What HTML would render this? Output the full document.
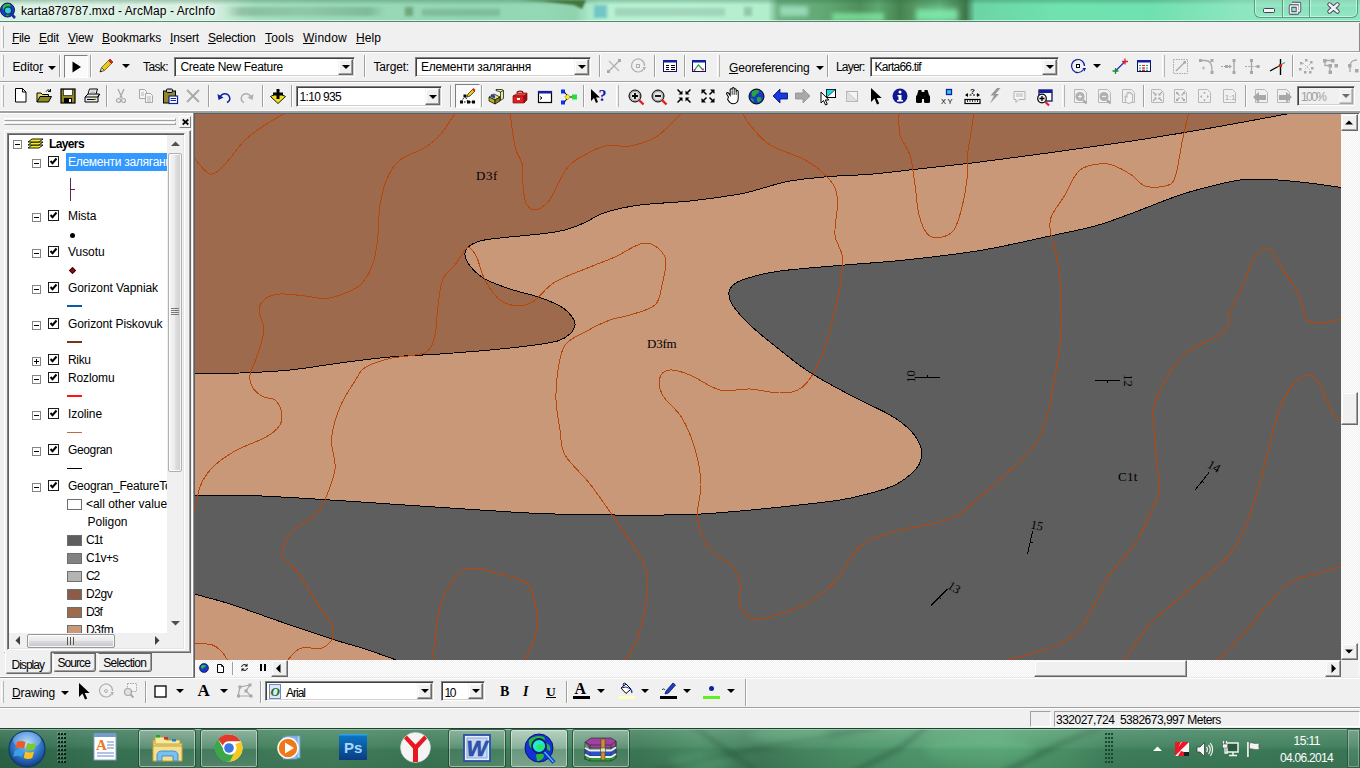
<!DOCTYPE html>
<html><head><meta charset="utf-8">
<style>
*{box-sizing:border-box;margin:0;padding:0}
html,body{width:1360px;height:768px;overflow:hidden;background:#f0f0f0;font-family:"Liberation Sans",sans-serif;font-size:12px;color:#000}
.a{position:absolute}
.t{position:absolute;white-space:nowrap;line-height:14px;font-size:12px}
.ser{font-family:"Liberation Serif",serif}
u{text-decoration:underline;text-underline-offset:1px}
.sep{position:absolute;width:2px;border-left:1px solid #a0a0a0;border-right:1px solid #fff}
.hline{position:absolute;left:0;width:1360px;height:2px;border-top:1px solid #a0a0a0;border-bottom:1px solid #fff}
.grip{position:absolute;width:3px;border-left:1px solid #fff;border-right:1px solid #b4b4b4}
.combo{position:absolute;background:#fff;border:1px solid;border-color:#808080 #fff #fff #808080;box-shadow:inset 1px 1px 0 #404040, inset -1px -1px 0 #d4d0c8}
.cbtn{position:absolute;background:#f0f0f0;border:1px solid;border-color:#f4f4f4 #696969 #696969 #f4f4f4;box-shadow:inset -1px -1px 0 #a0a0a0,inset 1px 1px 0 #fff}
.rbtn{position:absolute;background:#f0f0f0;border:1px solid;border-color:#f4f4f4 #696969 #696969 #f4f4f4;box-shadow:inset -1px -1px 0 #a0a0a0,inset 1px 1px 0 #fff}
.cbtn:after,.dd:after{content:"";position:absolute;left:50%;top:50%;margin:-2px 0 0 -4px;border:4px solid transparent;border-top:4px solid #000;border-bottom:0}
.dd{position:absolute;width:9px;height:6px}
svg{position:absolute;overflow:visible}
</style></head><body>

<!-- TITLEBAR -->
<div id="title" class="a" style="left:0;top:0;width:1360px;height:22px;overflow:hidden;background:linear-gradient(90deg,#d9f1e2 0,#d6f0e0 212px,#a6dfc1 255px,#9cdaba 330px,#98d8b7 395px,#93d6b4 470px,#95d8b6 540px,#8fd2ae 575px,#a8e6c6 588px,#b7f0d2 600px,#baf1d4 690px,#b2edcc 768px,#6fb083 778px,#68ac7c 806px,#5fa570 830px,#4f8f5c 860px,#5fa670 878px,#47834f 900px,#5a9c68 918px,#63b07c 940px,#4d8a58 958px,#3f7549 966px,#6cd4a6 975px,#70e2b0 1060px,#6fdcae 1360px)">
 <div class="a" style="left:225px;top:7px;width:160px;height:9px;background:linear-gradient(90deg,rgba(80,130,100,0),rgba(80,130,100,.35) 10%,rgba(80,130,100,.22) 50%,rgba(80,130,100,.35) 90%,rgba(80,130,100,0));filter:blur(1.500px)"></div>
 <div class="a" style="left:405px;top:7px;width:8px;height:9px;background:rgba(70,120,60,.5);filter:blur(1.500px)"></div>
 <div class="a" style="left:422px;top:9px;width:78px;height:7px;background:rgba(80,130,100,.3);filter:blur(1.500px)"></div>
 <div class="a" style="left:594px;top:5px;width:13px;height:13px;background:rgba(70,170,190,.6);filter:blur(1.500px)"></div>
 <div class="a" style="left:615px;top:8px;width:110px;height:8px;background:rgba(110,150,130,.3);filter:blur(1.500px)"></div>
 <div class="a" style="left:744px;top:7px;width:8px;height:9px;background:rgba(90,130,110,.35);filter:blur(1.500px)"></div>
 <div class="a" style="left:780px;top:6px;width:28px;height:10px;background:rgba(170,235,205,.7);filter:blur(2px)"></div>
 <div class="a" style="left:832px;top:13px;width:52px;height:8px;background:rgba(130,235,165,.75);filter:blur(2px)"></div>
 <div class="a" style="left:916px;top:9px;width:42px;height:12px;background:rgba(130,240,180,.8);filter:blur(2.500px)"></div>
 <div class="a" style="left:0;top:0;width:1360px;height:5px;background:linear-gradient(180deg,rgba(40,110,70,.32),rgba(40,110,70,0))"></div>
 <svg style="left:0;top:0" width="1360" height="22"><path d="M518,0L586,0L582,9L574,5L545,1.500z" fill="#44763c" style="filter:blur(1px)"/></svg>
 <div class="a" style="left:0;top:20px;width:1360px;height:1px;background:rgba(220,255,238,.75)"></div>
 <div class="a" style="left:0;top:21px;width:1360px;height:1px;background:#56866e"></div>
 <!-- window buttons -->
 <div class="a" style="left:1150px;top:0;width:210px;height:20px;background:linear-gradient(90deg,rgba(180,240,215,0),rgba(180,240,215,.45) 45%,rgba(180,240,215,.45))"></div>
 <div class="a" style="left:1254px;top:-4px;width:104px;height:22px;border:1px solid rgba(70,140,110,.8);border-radius:0 0 6px 6px;box-shadow:inset 0 0 0 1px rgba(215,250,235,.7);background:linear-gradient(180deg,rgba(255,255,255,.12),rgba(255,255,255,.04) 50%,rgba(0,0,0,.02) 51%,rgba(255,255,255,.06))"></div>
 <div class="a" style="left:1282px;top:0;width:1px;height:17px;background:rgba(70,140,110,.8)"></div>
 <div class="a" style="left:1283px;top:0;width:1px;height:17px;background:rgba(215,250,235,.7)"></div>
 <div class="a" style="left:1309px;top:0;width:1px;height:17px;background:rgba(70,140,110,.8)"></div>
 <div class="a" style="left:1310px;top:0;width:1px;height:17px;background:rgba(215,250,235,.7)"></div>
 <div class="a" style="left:1263px;top:8px;width:12px;height:5px;background:#f4f4f4;border:1px solid #46405a;border-radius:1.500px"></div>
 <svg style="left:1288px;top:1px" width="14" height="14" viewBox="0 0 14 14"><path d="M4,2.500h7.500v7.500h-1.500M2.500,5h7v7h-7z" fill="none" stroke="#46405a" stroke-width="3.400" stroke-linejoin="round"/><path d="M4,2.500h7.500v7.500h-1.500M2.500,5h7v7h-7z" fill="none" stroke="#f2f2f2" stroke-width="1.700" stroke-linejoin="round"/></svg>
 <svg style="left:1327px;top:2px" width="13" height="12" viewBox="0 0 13 12"><path d="M2.500,2.500L10.500,9.500M10.500,2.500L2.500,9.500" stroke="#46405a" stroke-width="4.400" stroke-linecap="round"/><path d="M2.500,2.500L10.500,9.500M10.500,2.500L2.500,9.500" stroke="#f2f2f2" stroke-width="2.600" stroke-linecap="round"/></svg>
 <svg style="left:0px;top:2px" width="17" height="18" viewBox="0 0 17 18"><circle cx="7.5" cy="8" r="7" fill="#1a3fc0" stroke="#0a1a60" stroke-width="1"/>
<path d="M3,4c2,-2 5,-2.5 7,-1.5c1,1.5 0,3 -1.5,3.5c-1.5,0.5 -2,2 -3.5,2.5c-1.5,0 -2.5,-2 -2,-4.5z" fill="#2fbf3f"/>
<path d="M6,11c1,-1 3,-1 4,0c0,2 -2,3 -3.500,3z" fill="#2fbf3f"/>
<circle cx="8" cy="8.5" r="3.6" fill="#35e0e8" fill-opacity=".85" stroke="#0a2a50" stroke-width="1.2"/>
<path d="M10.6,11.200L15,16" stroke="#1a2aa0" stroke-width="2.600"/></svg>
 <div class="t" style="left:21px;top:4.0px;letter-spacing:0.06px;text-shadow:0 0 6px #fff,0 0 8px #fff;">karta878787.mxd - ArcMap - ArcInfo</div>
</div>
<!-- MENUBAR -->
<div id="menu" class="a" style="left:0;top:22px;width:1360px;height:29px;background:#f0f0f0">
 <div class="grip" style="left:1px;top:4px;height:22px"></div>
</div>
<div class="t" style="left:12px;top:31.0px;letter-spacing:-0.34px;"><u>F</u>ile</div>
<div class="t" style="left:39px;top:31.0px;letter-spacing:-0.18px;"><u>E</u>dit</div>
<div class="t" style="left:68px;top:31.0px;letter-spacing:-0.20px;"><u>V</u>iew</div>
<div class="t" style="left:102px;top:31.0px;letter-spacing:-0.11px;"><u>B</u>ookmarks</div>
<div class="t" style="left:170px;top:31.0px;letter-spacing:-0.17px;"><u>I</u>nsert</div>
<div class="t" style="left:208px;top:31.0px;letter-spacing:-0.21px;"><u>S</u>election</div>
<div class="t" style="left:265px;top:31.0px;letter-spacing:0.20px;"><u>T</u>ools</div>
<div class="t" style="left:303px;top:31.0px;letter-spacing:0.22px;"><u>W</u>indow</div>
<div class="t" style="left:356px;top:31.0px;letter-spacing:0.08px;"><u>H</u>elp</div>
<div class="a" style="left:1359px;top:23px;width:1px;height:28px;background:#8a8a8a"></div>
<div class="hline" style="top:51px"></div>

<!-- TOOLBAR 1 -->
<div class="grip" style="left:1px;top:55px;height:22px"></div>
<div class="t" style="left:12.5px;top:60.0px;letter-spacing:-0.14px;">Edito<u>r</u></div>
<div class="dd" style="left:47px;top:65px"></div>
<div class="sep" style="left:59px;top:55px;height:22px"></div>
<div class="a" style="left:64px;top:55px;width:24px;height:23px;border:1px solid;border-color:#808080 #fff #fff #808080;background:#fafafa"></div>
<svg style="left:72px;top:61px" width="9" height="12" viewBox="0 0 9 12"><path d="M0.500,0.500v11l8.500,-5.500z" fill="#000"/></svg>
<div class="sep" style="left:90px;top:55px;height:22px"></div>
<svg style="left:98px;top:58px" width="16" height="16" viewBox="0 0 16 16"><path d="M2,14l1.5,-4.500l3,3z" fill="#e8d8a0" stroke="#333" stroke-width=".8"/><path d="M3.5,9.500l7,-7l3,3l-7,7z" fill="#e8c820" stroke="#6b5a00" stroke-width=".8"/><path d="M10.500,2.500l1.500,-1.500l3,3l-1.500,1.500z" fill="#e02020" stroke="#801010" stroke-width=".6"/><path d="M2,14l.7,-1.800l1.100,1.100z" fill="#000"/></svg>
<div class="dd" style="left:121px;top:63px"></div>
<div class="t" style="left:143px;top:60.0px;letter-spacing:-0.60px;">Task:</div>
<div class="combo" style="left:174px;top:57px;width:181px;height:20px"></div>
<div class="cbtn" style="left:338px;top:59px;width:15px;height:16px"></div>
<div class="t" style="left:180.5px;top:60.0px;letter-spacing:-0.31px;">Create New Feature</div>
<div class="sep" style="left:364px;top:55px;height:22px"></div>
<div class="t" style="left:373.5px;top:60.0px;letter-spacing:-0.17px;">Target:</div>
<div class="combo" style="left:415px;top:57px;width:176px;height:20px"></div>
<div class="cbtn" style="left:574px;top:59px;width:15px;height:16px"></div>
<div class="t" style="left:421px;top:60.0px;letter-spacing:-0.28px;">Елементи залягання</div>
<div class="sep" style="left:599px;top:55px;height:22px"></div>
<svg style="left:606px;top:58px" width="16" height="16" viewBox="0 0 16 16"><path d="M2,14L14,2" stroke="#a8a8a8" stroke-width="1.200"/><path d="M3,3L13,13" stroke="#b8b8b8" stroke-width="1.200"/><rect x="1" y="12" width="3" height="3" fill="#a8a8a8"/><rect x="12" y="1" width="3" height="3" fill="#a8a8a8"/></svg>
<svg style="left:630px;top:58px" width="16" height="16" viewBox="0 0 16 16"><path d="M13.500,11A6.500,6.500 0 1 1 14.500,8" fill="none" stroke="#b0b0b0" stroke-width="1.200"/><path d="M12.500,9l2,3.500l1.500,-3.500z" fill="#b0b0b0"/><rect x="6.500" y="6.500" width="3" height="3" fill="none" stroke="#b0b0b0"/></svg>
<div class="sep" style="left:654px;top:55px;height:22px"></div>
<svg style="left:662px;top:58px" width="16" height="16" viewBox="0 0 16 16"><rect x="1.500" y="2.500" width="13" height="11" fill="#fff" stroke="#101060" stroke-width="1"/><rect x="1" y="2" width="14" height="2.500" fill="#1020a0"/><path d="M3.500,7.500h3.500M9,7.500h3.500M3.500,9.500h3.500M9,9.500h3.500M3.500,11.500h3.500M9,11.500h3.500" stroke="#000" stroke-width="1" shape-rendering="crispEdges"/></svg>
<div class="sep" style="left:684px;top:55px;height:22px"></div>
<svg style="left:691px;top:58px" width="16" height="16" viewBox="0 0 16 16"><rect x="1.500" y="2.500" width="13" height="11" fill="#fff" stroke="#101060" stroke-width="1"/><rect x="1" y="2" width="14" height="2.500" fill="#1020a0"/><path d="M3.500,12l4,-5l4,4.500" fill="none" stroke="#20a040" stroke-width="1.200"/><circle cx="3.500" cy="12" r="1" fill="#e02020"/><circle cx="12" cy="11.500" r="1" fill="#e02020"/></svg>
<div class="grip" style="left:717px;top:55px;height:22px"></div>
<div class="t" style="left:729px;top:61.0px;letter-spacing:-0.16px;"><u>G</u>eoreferencing</div>
<div class="dd" style="left:815px;top:65px"></div>
<div class="sep" style="left:827px;top:55px;height:22px"></div>
<div class="t" style="left:836px;top:60.0px;letter-spacing:-0.81px;">Layer:</div>
<div class="combo" style="left:870px;top:57px;width:189px;height:20px"></div>
<div class="cbtn" style="left:1042px;top:59px;width:15px;height:16px"></div>
<div class="t" style="left:874.5px;top:60.0px;letter-spacing:-0.75px;">Karta66.tif</div>
<svg style="left:1070px;top:58px" width="16" height="16" viewBox="0 0 16 16"><path d="M13.500,11.500A6.500,6.500 0 1 1 14.500,8" fill="none" stroke="#1020a0" stroke-width="1.200"/><path d="M12.500,10l2,3.500l1.500,-3.500z" fill="#1020a0"/><rect x="6.500" y="6.500" width="3" height="3" fill="#fff" stroke="#000"/></svg>
<div class="dd" style="left:1092px;top:63px"></div>
<svg style="left:1112px;top:58px" width="17" height="17" viewBox="0 0 17 17"><path d="M3.500,13L13,3.500" stroke="#2030c0" stroke-width="1.300"/><path d="M10,3.500h6M13,.5v6" stroke="#e02020" stroke-width="1.300"/><path d="M.5,13h6M3.500,10v6" stroke="#109030" stroke-width="1.300"/></svg>
<svg style="left:1136px;top:58px" width="16" height="16" viewBox="0 0 16 16"><rect x="1.500" y="2.500" width="13" height="11" fill="#fff" stroke="#101060" stroke-width="1"/><rect x="1" y="2" width="14" height="2.500" fill="#1020a0"/><path d="M3,7.500h10M3,10h10M3,12.300h10" stroke="#30a050" stroke-width="1.200" stroke-dasharray="2,1.500"/><path d="M6,7.500h3M6,10h3M6,12.300h3" stroke="#e02020" stroke-width="1.200"/></svg>
<div class="grip" style="left:1162px;top:55px;height:22px"></div>
<svg style="left:1172px;top:58px" width="17" height="17" viewBox="0 0 17 17"><rect x="1.500" y="1.500" width="14" height="14" fill="none" stroke="#a8a8a8" stroke-dasharray="1.500,1"/><path d="M4,13L13,4" stroke="#a8a8a8" stroke-width="1.300"/><rect x="11.500" y="3" width="2.500" height="2.500" fill="#a8a8a8"/></svg>
<svg style="left:1198px;top:58px" width="17" height="17" viewBox="0 0 17 17"><path d="M2,2.500h5c4,0 7,3 7,9v3" fill="none" stroke="#a8a8a8" stroke-width="1.300"/><rect x="1" y="1" width="3" height="3" fill="#a8a8a8"/><rect x="12.500" y="1" width="3" height="3" fill="#a8a8a8"/><rect x="12.500" y="13" width="3" height="3" fill="#a8a8a8"/><path d="M4,10h3M5.500,8.500v3" stroke="#b0b0b0"/></svg>
<svg style="left:1220px;top:58px" width="17" height="17" viewBox="0 0 17 17"><path d="M1,8.500h9" stroke="#a8a8a8" stroke-width="1.200" stroke-dasharray="2,1"/><path d="M14,1v15" stroke="#a8a8a8" stroke-width="1.400"/><rect x="5" y="7" width="3" height="3" fill="#a8a8a8"/><rect x="12.500" y="1" width="3" height="3" fill="#a8a8a8"/><rect x="12.500" y="13" width="3" height="3" fill="#a8a8a8"/><path d="M9,6.500l3,2l-3,2z" fill="#a8a8a8"/></svg>
<svg style="left:1244px;top:58px" width="17" height="17" viewBox="0 0 17 17"><path d="M7.500,1v15" stroke="#a8a8a8" stroke-width="1.300"/><path d="M1,8.500h15" stroke="#a8a8a8" stroke-width="1.200" stroke-dasharray="2,1.200"/><rect x="6" y="1" width="3" height="3" fill="#a8a8a8"/><rect x="6" y="13" width="3" height="3" fill="#a8a8a8"/><rect x="12.500" y="7" width="3" height="3" fill="#a8a8a8"/></svg>
<svg style="left:1269px;top:58px" width="17" height="17" viewBox="0 0 17 17"><path d="M1,13L11,7.500" stroke="#000" stroke-width="1.300"/><path d="M11.500,1v16" stroke="#000" stroke-width="1.400"/><path d="M8,9l8,-4.500" stroke="#20a030" stroke-width="1"/><rect x="10" y="6" width="3" height="3" fill="#e02020"/></svg>
<div class="sep" style="left:1292px;top:55px;height:22px"></div>
<svg style="left:1298px;top:58px" width="17" height="17" viewBox="0 0 17 17"><g fill="#a8a8a8"><rect x="7" y="1" width="2.500" height="2.500"/><rect x="12" y="3" width="2.500" height="2.500"/><rect x="2" y="4" width="2.500" height="2.500"/><rect x="13" y="9" width="2.500" height="2.500"/><rect x="1" y="10" width="2.500" height="2.500"/><rect x="6" y="13" width="2.500" height="2.500"/><rect x="11" y="13" width="2.500" height="2.500"/></g><path d="M5,5l7,7M12,6l-6,6" stroke="#b8b8b8" stroke-dasharray="1.500,1.200"/></svg>
<svg style="left:1322px;top:58px" width="17" height="17" viewBox="0 0 17 17"><path d="M3,2.500h8M3,2.500v5h5v7" fill="none" stroke="#a8a8a8" stroke-width="1.300"/><g fill="#a8a8a8"><rect x="1" y="1" width="3.500" height="3.500"/><rect x="9" y="1" width="3.500" height="3.500"/><rect x="6.500" y="6" width="3.500" height="3.500"/><rect x="12.500" y="6" width="3.500" height="3.500"/><rect x="6.500" y="12.500" width="3.500" height="3.500"/></g></svg>
<svg style="left:1348px;top:58px" width="12" height="17" viewBox="0 0 12 17"><path d="M2,14v-6c0,-4 3,-6 7,-6" fill="none" stroke="#a8a8a8" stroke-width="1.300"/><g fill="#a8a8a8"><rect x="0" y="6" width="3.500" height="3.500"/><rect x="7" y="11" width="3.500" height="3.500"/></g></svg>
<div class="hline" style="top:81px"></div>

<!-- TOOLBAR 2 -->
<div class="grip" style="left:1px;top:85px;height:22px"></div>
<svg style="left:13px;top:87px" width="15" height="17" viewBox="0 0 15 17"><path d="M2.500,1.500h7l3.500,3.500v10h-10.500z" fill="#fff" stroke="#000" stroke-width="1"/><path d="M9.500,1.500v3.500h3.500" fill="none" stroke="#000" stroke-width="1"/></svg>
<svg style="left:36px;top:88px" width="17" height="16" viewBox="0 0 17 16"><path d="M1,14v-9h4l1.500,1.500h6v2" fill="#e8d870" stroke="#000" stroke-width="1"/><path d="M1,14l3,-5.500h11.500l-3,5.500z" fill="#908820" stroke="#000" stroke-width="1"/><path d="M10,3.500c1.500,-2 3.500,-2 4.500,0M14.500,3.500v-2.500M14.500,3.500h-2.500" fill="none" stroke="#000" stroke-width="1"/></svg>
<svg style="left:60px;top:88px" width="16" height="16" viewBox="0 0 16 16"><rect x="1" y="1" width="14" height="14" fill="#908820" stroke="#000" stroke-width="1.200"/><rect x="3.500" y="1.500" width="9" height="6" fill="#fff" stroke="#000" stroke-width=".6"/><rect x="4" y="10" width="8" height="5" fill="#000"/><rect x="9" y="11" width="2" height="3" fill="#fff"/></svg>
<svg style="left:84px;top:88px" width="17" height="16" viewBox="0 0 17 16"><path d="M4,6l1.500,-5h8l-1.500,5" fill="#fff" stroke="#000"/><path d="M1,9l3,-3h11.500l-1.500,3v5h-13z" fill="#e8e8e8" stroke="#000" stroke-width="1"/><path d="M1,9h13M14,9l1.500,-3" stroke="#000"/><path d="M3,11.500h9" stroke="#000" stroke-width="1"/><rect x="10" y="10" width="2.500" height="1.500" fill="#e8e020"/><path d="M6.500,3h5M6,4.700h5" stroke="#888" stroke-width=".7"/></svg>
<div class="sep" style="left:106px;top:85px;height:22px"></div>
<svg style="left:114px;top:88px" width="14" height="16" viewBox="0 0 14 16"><path d="M4,1l4,9M10,1l-4,9" stroke="#a8a8a8" stroke-width="1.300"/><circle cx="4.500" cy="12.500" r="2" fill="none" stroke="#a8a8a8" stroke-width="1.200"/><circle cx="9.500" cy="12.500" r="2" fill="none" stroke="#a8a8a8" stroke-width="1.200"/></svg>
<svg style="left:138px;top:88px" width="16" height="16" viewBox="0 0 16 16"><path d="M1.500,1.500h5l2,2v7h-7z" fill="#f4f4f4" stroke="#a8a8a8"/><path d="M7.500,5.500h5l2,2v7h-7z" fill="#f4f4f4" stroke="#a8a8a8"/><path d="M3,5h3M3,7h3M9,9h4M9,11h4M9,13h4" stroke="#b8b8b8"/></svg>
<svg style="left:162px;top:88px" width="17" height="17" viewBox="0 0 17 17"><rect x="1.500" y="3" width="12" height="12" fill="#908820" stroke="#000"/><rect x="4.500" y="1" width="6" height="3.500" rx="1" fill="#c8c8c8" stroke="#000"/><rect x="7" y="8" width="8.500" height="7.500" fill="#fff" stroke="#1020a0" stroke-width="1.200"/><path d="M8.500,10.500h5.500M8.500,12.500h5.500" stroke="#1020a0"/></svg>
<svg style="left:185px;top:88px" width="16" height="16" viewBox="0 0 16 16"><path d="M2,2L14,14M14,2L2,14" stroke="#a8a8a8" stroke-width="1.800"/></svg>
<div class="sep" style="left:208px;top:85px;height:22px"></div>
<svg style="left:217px;top:89px" width="14" height="15" viewBox="0 0 14 15"><path d="M3,8c2,-4.500 8,-4.500 9.500,0c.8,2.500 -.5,4.500 -2.500,5.500" fill="none" stroke="#1020a0" stroke-width="1.500"/><path d="M.5,5l1,6l5,-2.500z" fill="#1020a0"/></svg>
<svg style="left:240px;top:89px" width="14" height="15" viewBox="0 0 14 15"><path d="M11,8c-2,-4.500 -8,-4.500 -9.500,0c-.8,2.500 .5,4.500 2.500,5.500" fill="none" stroke="#b0b0b0" stroke-width="1.500"/><path d="M13.500,5l-1,6l-5,-2.500z" fill="#b0b0b0"/></svg>
<div class="sep" style="left:262px;top:85px;height:22px"></div>
<svg style="left:270px;top:88px" width="16" height="16" viewBox="0 0 16 16"><path d="M0.500,8.500l7.500,7l7.500,-7l-4,-2h-7z" fill="#f0e020" stroke="#000" stroke-width=".9"/><path d="M8,1v10M3,6h10" stroke="#000" stroke-width="3"/></svg>
<div class="sep" style="left:291px;top:85px;height:22px"></div>
<div class="combo" style="left:296px;top:86px;width:146px;height:21px"></div>
<div class="cbtn" style="left:425px;top:88px;width:15px;height:17px"></div>
<div class="t" style="left:299.5px;top:90.0px;letter-spacing:-0.65px;">1:10 935</div>
<div class="sep" style="left:450px;top:85px;height:22px"></div>
<div class="a" style="left:455px;top:84px;width:25px;height:24px;border:1px solid;border-color:#808080 #fff #fff #808080;background:#fafafa"></div>
<svg style="left:459px;top:88px" width="17" height="17" viewBox="0 0 17 17"><path d="M2,14l4,-6l3,6" fill="none" stroke="#000" stroke-dasharray="1.500,1.500"/><path d="M2,14h12" stroke="#000" stroke-dasharray="1.500,1.500"/><g fill="#000"><rect x="1" y="12.500" width="3" height="3"/><rect x="4.500" y="6.500" width="3" height="3"/><rect x="8" y="12.500" width="3" height="3"/><rect x="13" y="12.500" width="3" height="3"/></g><path d="M8,9l1,-3l5,-5l2,2l-5,5z" fill="#e8c820" stroke="#403000" stroke-width=".8"/><path d="M13,1.500l1.500,-1.500l2,2l-1.500,1.500z" fill="#e02020"/></svg>
<div class="sep" style="left:481px;top:85px;height:22px"></div>
<svg style="left:488px;top:88px" width="17" height="17" viewBox="0 0 17 17"><path d="M1,9l5,-3l6,3l-5,3z" fill="#e8e060" stroke="#000" stroke-width=".7"/><path d="M1,9v4l6,3v-4z" fill="#b8b030" stroke="#000" stroke-width=".7"/><path d="M7,12v4l5,-3v-4z" fill="#888020" stroke="#000" stroke-width=".7"/><path d="M8,1.500h6l1.500,1v8l-3,2v-8.500l-4.500,-1.500z" fill="#e8e8a0" stroke="#000" stroke-width=".7"/><path d="M12.500,4l3,-1.500" stroke="#000" stroke-width=".7"/><rect x="3" y="7" width="4" height="3" fill="#2040c0" transform="skewY(20) translate(0,-2)"/></svg>
<svg style="left:512px;top:89px" width="17" height="16" viewBox="0 0 17 16"><path d="M1,7l5,-3h9l-3,3z" fill="#f04040" stroke="#801010" stroke-width=".7"/><path d="M1,7h11v7h-11z" fill="#e02020" stroke="#801010" stroke-width=".7"/><path d="M12,7l3,-3v7l-3,3z" fill="#a01010" stroke="#801010" stroke-width=".7"/><path d="M5,4c0,-2.500 6,-2.500 6,0" fill="none" stroke="#801010" stroke-width="1.200"/><rect x="5" y="9" width="3" height="2" fill="#fff"/></svg>
<svg style="left:537px;top:89px" width="16" height="16" viewBox="0 0 16 16"><rect x="1.500" y="2.500" width="13" height="11" fill="#fff" stroke="#000" stroke-width="1.200"/><rect x="1" y="2" width="14" height="2.500" fill="#1020a0"/><path d="M3,7.500l2,1.500l-2,1.500" fill="none" stroke="#000" stroke-width="1"/></svg>
<svg style="left:560px;top:89px" width="17" height="16" viewBox="0 0 17 16"><rect x="1" y="0.500" width="4" height="4" fill="#1030f0"/><rect x="1" y="11.500" width="4" height="4" fill="#1030f0"/><path d="M4.500,3l3,4M4.500,13l3,-4M9,8h4" stroke="#000" stroke-width="1"/><path d="M7.500,5.200l2.800,2.800l-2.800,2.800l-2.800,-2.800z" fill="#f8f020" stroke="#806000" stroke-width=".5"/><rect x="12" y="5.500" width="5" height="5" fill="#20e040"/></svg>
<div class="sep" style="left:583px;top:85px;height:22px"></div>
<svg style="left:590px;top:88px" width="18" height="17" viewBox="0 0 18 17"><path d="M1,1v12l3,-3l2,5l2,-1l-2,-4.500h4z" fill="#000"/><text x="8.500" y="13" font-family="Liberation Serif" font-weight="bold" font-size="16" fill="#1020a0">?</text></svg>
<div class="grip" style="left:616px;top:85px;height:22px"></div>
<svg style="left:628px;top:89px" width="17" height="17" viewBox="0 0 17 17"><circle cx="7" cy="7" r="6" fill="#a8a8a8" stroke="#000" stroke-width="1"/><circle cx="7" cy="7" r="4" fill="#e4e4e4"/><path d="M4,7h6M7,4v6" stroke="#000" stroke-width="1.800"/><path d="M11,11l4.500,4.500" stroke="#e02020" stroke-width="2.400"/></svg>
<svg style="left:651px;top:89px" width="17" height="17" viewBox="0 0 17 17"><circle cx="7" cy="7" r="6" fill="#a8a8a8" stroke="#000" stroke-width="1"/><circle cx="7" cy="7" r="4" fill="#e4e4e4"/><path d="M4,7h6" stroke="#000" stroke-width="1.800"/><path d="M11,11l4.500,4.500" stroke="#e02020" stroke-width="2.400"/></svg>
<svg style="left:676px;top:88px" width="16" height="16" viewBox="0 0 16 16"><g stroke="#000" stroke-width="1.500" fill="none"><path d="M1.500,1.500l3.500,3.500M14.500,1.500l-3.500,3.500M1.500,14.500l3.500,-3.500M14.500,14.500l-3.500,-3.500"/></g><g fill="#000"><path d="M6.500,2.500v4h-4zM9.500,2.500v4h4zM6.500,13.500v-4h-4zM9.500,13.500v-4h4z"/></g></svg>
<svg style="left:700px;top:88px" width="16" height="16" viewBox="0 0 16 16"><g stroke="#000" stroke-width="1.500" fill="none"><path d="M3,3l3.500,3.500M13,3l-3.500,3.500M3,13l3.500,-3.500M13,13l-3.500,-3.500"/></g><g fill="#000"><path d="M1.500,1.500h4.500l-4.500,4.500zM14.500,1.500h-4.500l4.500,4.500zM1.500,14.500h4.500l-4.500,-4.500zM14.500,14.500h-4.500l4.500,-4.500z"/></g></svg>
<svg style="left:724px;top:87px" width="18" height="19" viewBox="0 0 18 19"><g transform="scale(1.120)"><path d="M4,9l-1.500,-2.500c-.8,-1.200 .8,-2 1.500,-1l1.500,2v-5c0,-1.300 1.800,-1.300 1.800,0v-1c0,-1.300 1.800,-1.300 1.800,0v1c0,-1.300 1.800,-1.300 1.800,0v1.500c0,-1.300 1.800,-1.300 1.800,0v6c0,3 -1.500,5 -4.500,5c-2.500,0 -3.500,-1 -5,-4z" fill="#fff" stroke="#000" stroke-width=".9"/><path d="M7.300,3v4M9.100,2.500v4.500M10.900,3.500v3.500" stroke="#000" stroke-width=".7"/></g></svg>
<svg style="left:748px;top:88px" width="17" height="17" viewBox="0 0 17 17"><circle cx="8.500" cy="8.500" r="7.500" fill="#1838c8" stroke="#000" stroke-width="1"/><path d="M4,3.500c2,-1.500 5,-2 7,-1c.5,2 -1,3 -2.500,3.500c-1,1.500 -1.500,3 -3,3c-1.500,-.5 -2.500,-3 -1.500,-5.500z" fill="#28a838"/><path d="M9,9.500c1.500,-1 3.500,-.5 4.500,.5c0,2.500 -1.500,4 -3.500,4.500c-1,-1.500 -1.500,-3.500 -1,-5z" fill="#28a838"/><path d="M3,11c1,0 2,1 2,2.500" stroke="#28a838" stroke-width="1.500" fill="none"/></svg>
<svg style="left:772px;top:88px" width="17" height="16" viewBox="0 0 17 16"><path d="M1,8l7,-7v4h7.500v6h-7.500v4z" fill="#1838e0" stroke="#000a60" stroke-width=".8"/></svg>
<svg style="left:794px;top:88px" width="17" height="16" viewBox="0 0 17 16"><path d="M16,8l-7,-7v4h-7.500v6h7.500v4z" fill="#a8a8a8" stroke="#909090" stroke-width=".8"/></svg>
<svg style="left:820px;top:88px" width="17" height="18" viewBox="0 0 17 18"><rect x="6.500" y="1.500" width="9" height="8" fill="#fff" stroke="#000"/><path d="M6.500,1.500h9l-9,8z" fill="#20d8e8" stroke="#000" stroke-width=".6"/><path d="M1,4v11l2.500,-2.500l2,4.500l1.800,-.8l-2,-4.200h3.500z" fill="#fff" stroke="#000" stroke-width="1"/></svg>
<svg style="left:844px;top:89px" width="16" height="15" viewBox="0 0 16 15"><rect x="2.500" y="2.500" width="11" height="10" fill="#f4f4f4" stroke="#b0b0b0"/><path d="M2.500,12.500v-10l11,10z" fill="#e0e0e0" stroke="#b0b0b0" stroke-width=".6"/></svg>
<svg style="left:869px;top:88px" width="14" height="17" viewBox="0 0 14 17"><path d="M2,0v14l3.500,-3.500l2.500,6l2.200,-1l-2.500,-5.500h5z" fill="#000"/></svg>
<svg style="left:892px;top:88px" width="16" height="16" viewBox="0 0 16 16"><circle cx="8" cy="8" r="7.500" fill="#101890"/><circle cx="8" cy="4" r="1.500" fill="#fff"/><path d="M5.500,7h4v5h1.500v1.500h-6v-1.500h1.500v-3.500h-1z" fill="#fff"/></svg>
<svg style="left:915px;top:88px" width="16" height="16" viewBox="0 0 16 16"><path d="M2,7l1.500,-5h3l.5,5zM14,7l-1.500,-5h-3l-.5,5z" fill="#000"/><rect x="6" y="4" width="4" height="4" fill="#000"/><rect x="1" y="7" width="6" height="8" rx="1.500" fill="#000"/><rect x="9" y="7" width="6" height="8" rx="1.500" fill="#000"/><rect x="7" y="8" width="2" height="3" fill="#000"/></svg>
<svg style="left:941px;top:88px" width="14" height="17" viewBox="0 0 14 17"><rect x="5.500" y="1.500" width="5" height="5" fill="#30c8f0" stroke="#1020a0" stroke-width="1.300"/><text x="0" y="16" font-family="Liberation Sans" font-size="7.500" fill="#000" letter-spacing="1.500">XY</text></svg>
<svg style="left:964px;top:88px" width="17" height="17" viewBox="0 0 17 17"><rect x="1" y="11.500" width="15" height="4" fill="#fff" stroke="#000" stroke-width="1.200"/><path d="M3.500,12v2M6,12v2M8.500,12v2M11,12v2M13.500,12v2" stroke="#000" stroke-width=".8"/><path d="M2,7h13" stroke="#000" stroke-dasharray="2,1.500"/><path d="M1,7l3,-2v4zM16,7l-3,-2v4z" fill="#000"/><text x="6" y="6" font-family="Liberation Sans" font-weight="bold" font-size="8" fill="#000">?</text></svg>
<svg style="left:988px;top:88px" width="13" height="16" viewBox="0 0 13 16"><path d="M9,0l-6.500,7.500h3.500l-4,8l9,-9.500h-3.500l5,-6z" fill="#989898"/></svg>
<svg style="left:1011px;top:89px" width="16" height="15" viewBox="0 0 16 15"><path d="M3,2.500h11v8h-6l-3,3v-3h-2z" fill="#f4f4f4" stroke="#b0b0b0"/><path d="M5,5h7M5,7h7" stroke="#b8b8b8"/></svg>
<svg style="left:1036px;top:89px" width="17" height="18" viewBox="0 0 17 18"><rect x="3" y="1" width="13" height="11" fill="#fff" stroke="#101060" stroke-width="1.300"/><rect x="3" y="1" width="13" height="3" fill="#1020a0"/><circle cx="6" cy="9.500" r="4.300" fill="#f0f0f0" stroke="#000" stroke-width="1.200"/><path d="M3.500,9.500h5M6,7v5" stroke="#000" stroke-width="1.300"/><path d="M9,12.500l4,4" stroke="#e02020" stroke-width="2.200"/></svg>
<div class="grip" style="left:1062px;top:85px;height:22px"></div>
<svg style="left:1072px;top:88px" width="17" height="17" viewBox="0 0 17 17"><path d="M2.500,1.500h9l3,3v10h-12z" fill="#f0f0f0" stroke="#b8b8b8"/><circle cx="8" cy="8.500" r="4.500" fill="#b0b0b0"/><path d="M11,12l3.500,3.500" stroke="#a8a8a8" stroke-width="2.200"/><path d="M6,8.500h4M8,6.500v4" stroke="#f0f0f0" stroke-width="1.200"/></svg>
<svg style="left:1096px;top:88px" width="17" height="17" viewBox="0 0 17 17"><path d="M2.500,1.500h9l3,3v10h-12z" fill="#f0f0f0" stroke="#b8b8b8"/><circle cx="8" cy="8.500" r="4.500" fill="#b0b0b0"/><path d="M11,12l3.500,3.500" stroke="#a8a8a8" stroke-width="2.200"/><path d="M6,8.500h4" stroke="#f0f0f0" stroke-width="1.200"/></svg>
<svg style="left:1120px;top:88px" width="17" height="17" viewBox="0 0 17 17"><path d="M2.500,1.500h9l3,3v10h-12z" fill="#f0f0f0" stroke="#b8b8b8"/><path d="M6,11l-1,-2c-.5,-1 .7,-1.500 1.200,-.7l.8,1v-4c0,-1 1.400,-1 1.400,0v-.5c0,-1 1.400,-1 1.400,0v.5c0,-1 1.400,-1 1.400,0v1c0,-1 1.400,-1 1.400,0v5c0,2.500 -1.300,4 -3.600,4c-2,0 -3,-1 -4,-3.500z" fill="#f4f4f4" stroke="#a8a8a8" stroke-width=".9"/></svg>
<div class="sep" style="left:1143px;top:85px;height:22px"></div>
<svg style="left:1149px;top:88px" width="17" height="17" viewBox="0 0 17 17"><path d="M2.500,1.500h9l3,3v10h-12z" fill="#f0f0f0" stroke="#b8b8b8"/><g stroke="#a8a8a8" stroke-width="1.100"><path d="M4,4l3,3M13,4l-3,3M4,13l3,-3M13,13l-3,-3"/></g><g fill="#a8a8a8"><path d="M7.500,5v2.500h-2.500zM9.500,5v2.500h2.500zM7.500,12v-2.500h-2.500zM9.500,12v-2.500h2.500z"/></g></svg>
<svg style="left:1172px;top:88px" width="17" height="17" viewBox="0 0 17 17"><path d="M2.500,1.500h9l3,3v10h-12z" fill="#f0f0f0" stroke="#b8b8b8"/><g stroke="#a8a8a8" stroke-width="1.100"><path d="M4.500,4.500l3,3M12.500,4.500l-3,3M4.500,12.500l3,-3M12.500,12.500l-3,-3"/></g><g fill="#a8a8a8"><path d="M4,4h2.500l-2.500,2.500zM13,4h-2.500l2.500,2.500zM4,13h2.500l-2.500,-2.500zM13,13h-2.500l2.500,-2.500z"/></g></svg>
<svg style="left:1196px;top:88px" width="17" height="17" viewBox="0 0 17 17"><path d="M2.500,1.500h9l3,3v10h-12z" fill="#f0f0f0" stroke="#b8b8b8"/><g fill="#a8a8a8"><path d="M8.500,3.500l1.500,2h-3zM8.500,13.500l1.500,-2h-3zM4,8.500l2,-1.500v3zM13,8.500l-2,-1.500v3z"/></g></svg>
<svg style="left:1221px;top:88px" width="17" height="17" viewBox="0 0 17 17"><path d="M2.500,1.500h9l3,3v10h-12z" fill="#f0f0f0" stroke="#b8b8b8"/><text x="4" y="12" font-family="Liberation Sans" font-size="7.500" fill="#a0a0a0">1:1</text></svg>
<div class="sep" style="left:1245px;top:85px;height:22px"></div>
<svg style="left:1252px;top:88px" width="17" height="17" viewBox="0 0 17 17"><path d="M3.500,1.500h9l3,3v10h-12z" fill="#f0f0f0" stroke="#b8b8b8"/><path d="M1,9l6,-5v3h7v5h-7v3z" fill="#a8a8a8"/></svg>
<svg style="left:1276px;top:88px" width="17" height="17" viewBox="0 0 17 17"><path d="M1.500,1.500h9l3,3v10h-12z" fill="#f0f0f0" stroke="#b8b8b8"/><path d="M16,9l-6,-5v3h-7v5h7v3z" fill="#a8a8a8"/></svg>
<div class="combo" style="left:1297px;top:86px;width:58px;height:20px;background:#f0f0f0"></div>
<div class="cbtn" style="left:1339px;top:88px;width:14px;height:16px;opacity:.55"></div>
<div class="t" style="left:1301px;top:90.0px;letter-spacing:-1.55px;color:#a0a0a0;">100%</div>
<div class="a" style="left:0;top:110px;width:1360px;height:1px;background:#fbfbfb"></div>
<div class="a" style="left:0;top:111px;width:1360px;height:2px;background:#a0a0a0"></div>

<!-- TOC -->
<div class="a" style="left:0;top:113px;width:195px;height:565px;background:#f0f0f0"></div>
<div class="a" style="left:0;top:113px;width:193px;height:1px;background:#fff"></div>
<div class="a" style="left:192px;top:113px;width:1px;height:564px;background:#fff"></div>
<div class="a" style="left:0;top:676px;width:193px;height:1px;background:#fff"></div>
<div class="a" style="left:193px;top:113px;width:1px;height:565px;background:#909090"></div>
<div class="a" style="left:0;top:677px;width:195px;height:1px;background:#888"></div>
<div class="a" style="left:194px;top:113px;width:1px;height:564px;background:#5a6068"></div>
<div class="a" style="left:4px;top:118px;width:172px;height:3px;border:1px solid;border-color:#fff #a0a0a0 #a0a0a0 #fff"></div>
<div class="a" style="left:4px;top:122px;width:172px;height:3px;border:1px solid;border-color:#fff #a0a0a0 #a0a0a0 #fff"></div>
<div class="a" style="left:179px;top:116px;width:12px;height:12px;border:1px solid;border-color:#fff #808080 #808080 #fff"></div>
<svg style="left:182px;top:119px" width="7" height="6" viewBox="0 0 7 6"><path d="M.7,.5L6.300,5.500M6.300,.5L.7,5.500" stroke="#000" stroke-width="1.700"/></svg>
<div class="a" style="left:4px;top:130px;width:187px;height:523px;border:1px solid;border-color:#fff #696969 #696969 #fff;box-shadow:inset -1px -1px 0 #a0a0a0"></div>
<div class="a" style="left:7px;top:133px;width:178px;height:517px;background:#fff;border:1px solid;border-color:#808080 #fff #fff #808080;box-shadow:inset 1px 1px 0 #606060, inset -1px -1px 0 #e4e4e4"></div>
<div class="a" style="left:9px;top:135px;width:158px;height:498px;overflow:hidden">
<svg style="left:4px;top:5px" width="9" height="9" viewBox="0 0 9 9"><rect x=".5" y=".5" width="8" height="8" fill="#fff" stroke="#848484"/><path d="M2,4.500h5" stroke="#000"/></svg>
<svg style="left:18px;top:2px" width="17" height="15" viewBox="0 0 17 15"><g fill="#f4ec20" stroke="#000" stroke-width=".9"><path d="M1,11l4,-3h11l-4,3z"/><path d="M1,8l4,-3h11l-4,3z"/><path d="M1,5l4,-3h11l-4,3z"/></g></svg>
<div class="t" style="left:40px;top:1.8px;letter-spacing:-0.62px;font-weight:bold;">Layers</div>
<div class="a" style="left:57px;top:18px;width:101px;height:18px;background:#3399ff"></div>
<svg style="left:23px;top:24px" width="9" height="9" viewBox="0 0 9 9"><rect x=".5" y=".5" width="8" height="8" fill="#fff" stroke="#848484"/><path d="M2,4.500h5" stroke="#000"/></svg>
<svg style="left:39px;top:21px" width="11" height="11" viewBox="0 0 11 11"><rect x=".5" y=".5" width="10" height="10" fill="#fff" stroke="#1c1c1c"/><path d="M2.500,5l2,2.200l4,-4.700" fill="none" stroke="#000" stroke-width="2"/></svg>
<div class="t" style="left:59px;top:19.8px;letter-spacing:-0.28px;color:#fff;">Елементи залягання</div>
<svg style="left:23px;top:78px" width="9" height="9" viewBox="0 0 9 9"><rect x=".5" y=".5" width="8" height="8" fill="#fff" stroke="#848484"/><path d="M2,4.500h5" stroke="#000"/></svg>
<svg style="left:39px;top:75px" width="11" height="11" viewBox="0 0 11 11"><rect x=".5" y=".5" width="10" height="10" fill="#fff" stroke="#1c1c1c"/><path d="M2.500,5l2,2.200l4,-4.700" fill="none" stroke="#000" stroke-width="2"/></svg>
<div class="t" style="left:59px;top:73.8px;letter-spacing:-0.07px;">Mista</div>
<svg style="left:23px;top:114px" width="9" height="9" viewBox="0 0 9 9"><rect x=".5" y=".5" width="8" height="8" fill="#fff" stroke="#848484"/><path d="M2,4.500h5" stroke="#000"/></svg>
<svg style="left:39px;top:111px" width="11" height="11" viewBox="0 0 11 11"><rect x=".5" y=".5" width="10" height="10" fill="#fff" stroke="#1c1c1c"/><path d="M2.500,5l2,2.200l4,-4.700" fill="none" stroke="#000" stroke-width="2"/></svg>
<div class="t" style="left:59px;top:109.8px;letter-spacing:-0.05px;">Vusotu</div>
<svg style="left:23px;top:150px" width="9" height="9" viewBox="0 0 9 9"><rect x=".5" y=".5" width="8" height="8" fill="#fff" stroke="#848484"/><path d="M2,4.500h5" stroke="#000"/></svg>
<svg style="left:39px;top:147px" width="11" height="11" viewBox="0 0 11 11"><rect x=".5" y=".5" width="10" height="10" fill="#fff" stroke="#1c1c1c"/><path d="M2.500,5l2,2.200l4,-4.700" fill="none" stroke="#000" stroke-width="2"/></svg>
<div class="t" style="left:59px;top:145.8px;letter-spacing:-0.07px;">Gorizont Vapniak</div>
<svg style="left:23px;top:186px" width="9" height="9" viewBox="0 0 9 9"><rect x=".5" y=".5" width="8" height="8" fill="#fff" stroke="#848484"/><path d="M2,4.500h5" stroke="#000"/></svg>
<svg style="left:39px;top:183px" width="11" height="11" viewBox="0 0 11 11"><rect x=".5" y=".5" width="10" height="10" fill="#fff" stroke="#1c1c1c"/><path d="M2.500,5l2,2.200l4,-4.700" fill="none" stroke="#000" stroke-width="2"/></svg>
<div class="t" style="left:59px;top:181.8px;letter-spacing:-0.13px;">Gorizont Piskovuk</div>
<svg style="left:23px;top:222px" width="9" height="9" viewBox="0 0 9 9"><rect x=".5" y=".5" width="8" height="8" fill="#fff" stroke="#848484"/><path d="M2,4.500h5M4.500,2v5" stroke="#000"/></svg>
<svg style="left:39px;top:219px" width="11" height="11" viewBox="0 0 11 11"><rect x=".5" y=".5" width="10" height="10" fill="#fff" stroke="#1c1c1c"/><path d="M2.500,5l2,2.200l4,-4.700" fill="none" stroke="#000" stroke-width="2"/></svg>
<div class="t" style="left:59px;top:217.8px;letter-spacing:-0.33px;">Riku</div>
<svg style="left:23px;top:240px" width="9" height="9" viewBox="0 0 9 9"><rect x=".5" y=".5" width="8" height="8" fill="#fff" stroke="#848484"/><path d="M2,4.500h5" stroke="#000"/></svg>
<svg style="left:39px;top:237px" width="11" height="11" viewBox="0 0 11 11"><rect x=".5" y=".5" width="10" height="10" fill="#fff" stroke="#1c1c1c"/><path d="M2.500,5l2,2.200l4,-4.700" fill="none" stroke="#000" stroke-width="2"/></svg>
<div class="t" style="left:59px;top:235.8px;letter-spacing:-0.12px;">Rozlomu</div>
<svg style="left:23px;top:276px" width="9" height="9" viewBox="0 0 9 9"><rect x=".5" y=".5" width="8" height="8" fill="#fff" stroke="#848484"/><path d="M2,4.500h5" stroke="#000"/></svg>
<svg style="left:39px;top:273px" width="11" height="11" viewBox="0 0 11 11"><rect x=".5" y=".5" width="10" height="10" fill="#fff" stroke="#1c1c1c"/><path d="M2.500,5l2,2.200l4,-4.700" fill="none" stroke="#000" stroke-width="2"/></svg>
<div class="t" style="left:59px;top:271.8px;letter-spacing:-0.10px;">Izoline</div>
<svg style="left:23px;top:312px" width="9" height="9" viewBox="0 0 9 9"><rect x=".5" y=".5" width="8" height="8" fill="#fff" stroke="#848484"/><path d="M2,4.500h5" stroke="#000"/></svg>
<svg style="left:39px;top:309px" width="11" height="11" viewBox="0 0 11 11"><rect x=".5" y=".5" width="10" height="10" fill="#fff" stroke="#1c1c1c"/><path d="M2.500,5l2,2.200l4,-4.700" fill="none" stroke="#000" stroke-width="2"/></svg>
<div class="t" style="left:59px;top:307.8px;letter-spacing:-0.36px;">Geogran</div>
<svg style="left:23px;top:348px" width="9" height="9" viewBox="0 0 9 9"><rect x=".5" y=".5" width="8" height="8" fill="#fff" stroke="#848484"/><path d="M2,4.500h5" stroke="#000"/></svg>
<svg style="left:39px;top:345px" width="11" height="11" viewBox="0 0 11 11"><rect x=".5" y=".5" width="10" height="10" fill="#fff" stroke="#1c1c1c"/><path d="M2.500,5l2,2.200l4,-4.700" fill="none" stroke="#000" stroke-width="2"/></svg>
<div class="t" style="left:59px;top:343.8px;letter-spacing:-0.24px;">Geogran_FeatureToP</div>
<div class="a" style="left:61px;top:43px;width:1px;height:23px;background:#5a2848"></div>
<div class="a" style="left:62px;top:54px;width:4px;height:1px;background:#5a2848"></div>
<div class="a" style="left:61px;top:98px;width:5px;height:5px;border-radius:50%;background:#000"></div>
<div class="a" style="left:61px;top:133px;width:5px;height:5px;transform:rotate(45deg);background:#8b1010;border:0.5px solid #400"></div>
<div class="a" style="left:58px;top:170px;width:15px;height:2px;background:#0a5aa8"></div>
<div class="a" style="left:58px;top:206px;width:15px;height:2px;background:#7a3418"></div>
<div class="a" style="left:58px;top:260px;width:15px;height:2px;background:#ff1414"></div>
<div class="a" style="left:58px;top:297px;width:15px;height:1px;background:#c46a3a"></div>
<div class="a" style="left:58px;top:333px;width:15px;height:1px;background:#000"></div>
<div class="a" style="left:58px;top:364px;width:15px;height:11px;background:#fff;border:1px solid #6e6e6e"></div>
<div class="t" style="left:77px;top:361.8px;letter-spacing:-0.04px;">&lt;all other values></div>
<div class="t" style="left:78.5px;top:379.8px;letter-spacing:-0.00px;">Poligon</div>
<div class="a" style="left:58px;top:400px;width:15px;height:11px;background:#5e5e5e;border:1px solid #6e6e6e"></div>
<div class="t" style="left:77px;top:397.8px;letter-spacing:-0.90px;">C1t</div>
<div class="a" style="left:58px;top:418px;width:15px;height:11px;background:#828282;border:1px solid #6e6e6e"></div>
<div class="t" style="left:77px;top:415.8px;letter-spacing:-0.47px;">C1v+s</div>
<div class="a" style="left:58px;top:436px;width:15px;height:11px;background:#b4b4b4;border:1px solid #6e6e6e"></div>
<div class="t" style="left:77px;top:433.8px;letter-spacing:-1.17px;">C2</div>
<div class="a" style="left:58px;top:454px;width:15px;height:11px;background:#8c5c48;border:1px solid #6e6e6e"></div>
<div class="t" style="left:77px;top:451.8px;letter-spacing:-0.38px;">D2gv</div>
<div class="a" style="left:58px;top:472px;width:15px;height:11px;background:#9e6a4d;border:1px solid #6e6e6e"></div>
<div class="t" style="left:77px;top:469.8px;letter-spacing:-0.90px;">D3f</div>
<div class="a" style="left:58px;top:490px;width:15px;height:11px;background:#c99879;border:1px solid #6e6e6e"></div>
<div class="t" style="left:77px;top:487.8px;letter-spacing:-0.34px;">D3fm</div>
</div>
<div class="a" style="left:167px;top:135px;width:16px;height:498px;background:#f0f0f0"></div>
<svg style="left:171px;top:141px" width="9" height="5" viewBox="0 0 9 5"><path d="M0,5l4.500,-4.500l4.500,4.500z" fill="#505050"/></svg>
<svg style="left:171px;top:621px" width="9" height="5" viewBox="0 0 9 5"><path d="M0,0l4.500,4.500l4.500,-4.500z" fill="#505050"/></svg>
<div class="a" style="left:168px;top:153px;width:14px;height:319px;border:1px solid #b0b0b0;border-radius:2px;background:linear-gradient(90deg,#f5f5f5,#ececee 45%,#dddee0 55%,#cdced2);box-shadow:inset 0 0 0 1px rgba(255,255,255,.8)"></div>
<div class="a" style="left:171px;top:308px;width:8px;height:1px;background:#7a7a7a"></div>
<div class="a" style="left:171px;top:310px;width:8px;height:1px;background:#7a7a7a"></div>
<div class="a" style="left:171px;top:312px;width:8px;height:1px;background:#7a7a7a"></div>
<div class="a" style="left:171px;top:314px;width:8px;height:1px;background:#7a7a7a"></div>
<div class="a" style="left:9px;top:633px;width:174px;height:15px;background:#f0f0f0"></div>
<svg style="left:15px;top:636px" width="5" height="9" viewBox="0 0 5 9"><path d="M5,0l-4.500,4.500l4.500,4.500z" fill="#404040"/></svg>
<svg style="left:155px;top:636px" width="5" height="9" viewBox="0 0 5 9"><path d="M0,0l4.500,4.500l-4.500,4.500z" fill="#404040"/></svg>
<div class="a" style="left:27px;top:634px;width:88px;height:14px;border:1px solid #979797;border-radius:2px;background:linear-gradient(180deg,#f5f5f5,#e9e9eb 45%,#d9dadc 55%,#c4c5c9);box-shadow:inset 0 0 0 1px rgba(255,255,255,.8)"></div>
<div class="a" style="left:67px;top:637px;width:1px;height:8px;background:#555"></div>
<div class="a" style="left:70px;top:637px;width:1px;height:8px;background:#555"></div>
<div class="a" style="left:73px;top:637px;width:1px;height:8px;background:#555"></div>
<div class="a" style="left:53px;top:653px;width:43px;height:19px;background:#f0f0f0;border:1px solid;border-color:#696969 #696969 #696969 #fff;border-radius:0 0 3px 3px;box-shadow:inset -1px -1px 0 #a0a0a0"></div>
<div class="a" style="left:98px;top:653px;width:54px;height:19px;background:#f0f0f0;border:1px solid;border-color:#696969 #696969 #696969 #fff;border-radius:0 0 3px 3px;box-shadow:inset -1px -1px 0 #a0a0a0"></div>
<div class="a" style="left:5px;top:651px;width:47px;height:23px;background:#f0f0f0;border:1px solid;border-color:#f0f0f0 #696969 #696969 #fff;border-radius:0 0 3px 3px;box-shadow:inset -1px -1px 0 #a0a0a0"></div>
<div class="t" style="left:11.5px;top:658.2px;letter-spacing:-0.98px;">Display</div>
<div class="t" style="left:57.4px;top:656.0px;letter-spacing:-0.91px;">Source</div>
<div class="t" style="left:103.2px;top:656.0px;letter-spacing:-0.71px;">Selection</div>
<!-- MAP -->
<div class="a" style="left:194px;top:113px;width:1165px;height:1px;background:#5a6068"></div>
<div id="map" class="a" style="left:195px;top:114px;width:1146px;height:546px;background:#c99879;overflow:hidden">
<svg class="a" style="left:0;top:0" width="1146" height="546" viewBox="195 114 1146 546" shape-rendering="crispEdges">
<path d="M194,112L1296,112C1280.8,115.1 1232.7,124.2 1205.0,129.0C1177.3,133.8 1155.0,137.5 1130.0,141.3C1105.0,145.1 1080.0,148.6 1055.0,152.0C1030.0,155.4 1005.0,158.9 980.0,162.0C955.0,165.1 923.3,168.4 905.0,170.5C886.7,172.6 882.5,173.3 870.0,174.3C857.5,175.3 843.3,175.4 830.0,176.5C816.7,177.6 800.8,179.2 790.0,181.0C779.2,182.8 773.3,185.3 765.0,187.5C756.7,189.7 752.5,191.8 740.0,194.0C727.5,196.2 706.7,199.2 690.0,201.0C673.3,202.8 654.2,203.1 640.0,205.0C625.8,206.9 614.2,209.6 605.0,212.5C595.8,215.4 591.7,219.6 585.0,222.5C578.3,225.4 572.5,228.1 565.0,230.0C557.5,231.9 550.8,232.7 540.0,234.0C529.2,235.3 510.0,236.8 500.0,238.0C490.0,239.2 485.4,239.4 480.0,241.0C474.6,242.6 470.0,245.2 467.5,247.5C465.0,249.8 464.6,251.9 465.0,255.0C465.4,258.1 466.7,262.0 470.0,266.0C473.3,270.0 478.3,275.2 485.0,279.0C491.7,282.8 500.8,285.9 510.0,289.0C519.2,292.1 531.2,294.4 540.0,297.5C548.8,300.6 557.1,304.2 562.5,307.5C567.9,310.8 570.4,314.6 572.5,317.5C574.6,320.4 575.4,322.2 575.0,325.0C574.6,327.8 572.9,331.3 570.0,334.0C567.1,336.7 563.3,339.2 557.5,341.0C551.7,342.8 546.2,343.5 535.0,345.0C523.8,346.5 505.8,348.5 490.0,350.0C474.2,351.5 456.7,352.8 440.0,354.0C423.3,355.2 406.7,355.5 390.0,357.0C373.3,358.5 356.7,360.8 340.0,363.0C323.3,365.2 306.7,368.3 290.0,370.0C273.3,371.7 256.0,372.4 240.0,373.0C224.0,373.6 201.7,373.4 194.0,373.5L194,112Z" fill="#9e6a4d"/>
<path d="M1342,187.5C1335.8,186.7 1317.0,183.8 1305.0,182.5C1293.0,181.2 1280.0,180.0 1270.0,179.5C1260.0,179.0 1253.3,178.8 1245.0,179.5C1236.7,180.2 1230.8,181.4 1220.0,184.0C1209.2,186.6 1195.0,190.0 1180.0,195.0C1165.0,200.0 1144.2,208.8 1130.0,214.0C1115.8,219.2 1108.3,222.3 1095.0,226.0C1081.7,229.7 1069.2,231.9 1050.0,236.0C1030.8,240.1 1004.2,246.5 980.0,250.5C955.8,254.5 927.5,257.6 905.0,260.0C882.5,262.4 865.8,263.2 845.0,265.0C824.2,266.8 795.8,268.9 780.0,271.0C764.2,273.1 757.5,275.4 750.0,277.5C742.5,279.6 738.5,281.0 735.0,283.5C731.5,286.0 729.4,288.9 729.0,292.5C728.6,296.1 729.0,299.6 732.5,305.0C736.0,310.4 742.1,317.5 750.0,325.0C757.9,332.5 770.0,342.1 780.0,350.0C790.0,357.9 798.3,365.0 810.0,372.5C821.7,380.0 836.7,387.9 850.0,395.0C863.3,402.1 880.0,409.2 890.0,415.0C900.0,420.8 905.0,425.0 910.0,430.0C915.0,435.0 918.1,440.4 920.0,445.0C921.9,449.6 922.3,453.3 921.5,457.5C920.7,461.7 919.4,465.4 915.0,470.0C910.6,474.6 902.9,481.0 895.0,485.0C887.1,489.0 876.7,491.5 867.5,494.0C858.3,496.5 852.9,498.0 840.0,500.0C827.1,502.0 806.7,504.2 790.0,506.0C773.3,507.8 756.7,509.6 740.0,511.0C723.3,512.4 710.8,513.8 690.0,514.5C669.2,515.2 640.0,515.2 615.0,515.0C590.0,514.8 565.0,514.5 540.0,513.5C515.0,512.5 490.0,510.6 465.0,509.0C440.0,507.4 415.0,505.7 390.0,504.0C365.0,502.3 338.3,500.4 315.0,499.0C291.7,497.6 270.2,496.2 250.0,495.5C229.8,494.8 203.3,495.1 194.0,495.0L194,594C200.0,595.7 215.7,599.4 230.0,604.0C244.3,608.6 262.5,615.5 280.0,621.5C297.5,627.5 320.8,635.4 335.0,640.0C349.2,644.6 354.3,645.5 365.0,649.0C375.7,652.5 393.3,659.0 399.0,661.0L1342,661Z" fill="#5e5e5e"/>
<path d="M1296.0,112.3C1280.8,115.1 1232.7,124.2 1205.0,129.0C1177.3,133.8 1155.0,137.5 1130.0,141.3C1105.0,145.1 1080.0,148.6 1055.0,152.0C1030.0,155.4 1005.0,158.9 980.0,162.0C955.0,165.1 923.3,168.4 905.0,170.5C886.7,172.6 882.5,173.3 870.0,174.3C857.5,175.3 843.3,175.4 830.0,176.5C816.7,177.6 800.8,179.2 790.0,181.0C779.2,182.8 773.3,185.3 765.0,187.5C756.7,189.7 752.5,191.8 740.0,194.0C727.5,196.2 706.7,199.2 690.0,201.0C673.3,202.8 654.2,203.1 640.0,205.0C625.8,206.9 614.2,209.6 605.0,212.5C595.8,215.4 591.7,219.6 585.0,222.5C578.3,225.4 572.5,228.1 565.0,230.0C557.5,231.9 550.8,232.7 540.0,234.0C529.2,235.3 510.0,236.8 500.0,238.0C490.0,239.2 485.4,239.4 480.0,241.0C474.6,242.6 470.0,245.2 467.5,247.5C465.0,249.8 464.6,251.9 465.0,255.0C465.4,258.1 466.7,262.0 470.0,266.0C473.3,270.0 478.3,275.2 485.0,279.0C491.7,282.8 500.8,285.9 510.0,289.0C519.2,292.1 531.2,294.4 540.0,297.5C548.8,300.6 557.1,304.2 562.5,307.5C567.9,310.8 570.4,314.6 572.5,317.5C574.6,320.4 575.4,322.2 575.0,325.0C574.6,327.8 572.9,331.3 570.0,334.0C567.1,336.7 563.3,339.2 557.5,341.0C551.7,342.8 546.2,343.5 535.0,345.0C523.8,346.5 505.8,348.5 490.0,350.0C474.2,351.5 456.7,352.8 440.0,354.0C423.3,355.2 406.7,355.5 390.0,357.0C373.3,358.5 356.7,360.8 340.0,363.0C323.3,365.2 306.7,368.3 290.0,370.0C273.3,371.7 256.0,372.4 240.0,373.0C224.0,373.6 201.7,373.4 194.0,373.5" fill="none" stroke="#000" stroke-width="1"/>
<path d="M1342.0,187.5C1335.8,186.7 1317.0,183.8 1305.0,182.5C1293.0,181.2 1280.0,180.0 1270.0,179.5C1260.0,179.0 1253.3,178.8 1245.0,179.5C1236.7,180.2 1230.8,181.4 1220.0,184.0C1209.2,186.6 1195.0,190.0 1180.0,195.0C1165.0,200.0 1144.2,208.8 1130.0,214.0C1115.8,219.2 1108.3,222.3 1095.0,226.0C1081.7,229.7 1069.2,231.9 1050.0,236.0C1030.8,240.1 1004.2,246.5 980.0,250.5C955.8,254.5 927.5,257.6 905.0,260.0C882.5,262.4 865.8,263.2 845.0,265.0C824.2,266.8 795.8,268.9 780.0,271.0C764.2,273.1 757.5,275.4 750.0,277.5C742.5,279.6 738.5,281.0 735.0,283.5C731.5,286.0 729.4,288.9 729.0,292.5C728.6,296.1 729.0,299.6 732.5,305.0C736.0,310.4 742.1,317.5 750.0,325.0C757.9,332.5 770.0,342.1 780.0,350.0C790.0,357.9 798.3,365.0 810.0,372.5C821.7,380.0 836.7,387.9 850.0,395.0C863.3,402.1 880.0,409.2 890.0,415.0C900.0,420.8 905.0,425.0 910.0,430.0C915.0,435.0 918.1,440.4 920.0,445.0C921.9,449.6 922.3,453.3 921.5,457.5C920.7,461.7 919.4,465.4 915.0,470.0C910.6,474.6 902.9,481.0 895.0,485.0C887.1,489.0 876.7,491.5 867.5,494.0C858.3,496.5 852.9,498.0 840.0,500.0C827.1,502.0 806.7,504.2 790.0,506.0C773.3,507.8 756.7,509.6 740.0,511.0C723.3,512.4 710.8,513.8 690.0,514.5C669.2,515.2 640.0,515.2 615.0,515.0C590.0,514.8 565.0,514.5 540.0,513.5C515.0,512.5 490.0,510.6 465.0,509.0C440.0,507.4 415.0,505.7 390.0,504.0C365.0,502.3 338.3,500.4 315.0,499.0C291.7,497.6 270.2,496.2 250.0,495.5C229.8,494.8 203.3,495.1 194.0,495.0" fill="none" stroke="#000" stroke-width="1"/>
<path d="M194.0,594.0C200.0,595.7 215.7,599.4 230.0,604.0C244.3,608.6 262.5,615.5 280.0,621.5C297.5,627.5 320.8,635.4 335.0,640.0C349.2,644.6 354.3,645.5 365.0,649.0C375.7,652.5 393.3,659.0 399.0,661.0" fill="none" stroke="#000" stroke-width="1"/>
<path d="M194.0,157.5C196.7,160.2 204.8,172.9 210.0,174.0C215.2,175.1 219.2,169.7 225.0,164.0C230.8,158.3 238.3,146.5 245.0,140.0C251.7,133.5 258.0,129.7 265.0,125.0C272.0,120.3 283.3,114.2 287.0,112.0" fill="none" stroke="#b84608" stroke-width="1"/>
<path d="M456.0,112.0C453.3,115.8 445.2,129.1 440.0,135.0C434.8,140.9 431.7,143.3 425.0,147.5C418.3,151.7 406.2,155.0 400.0,160.0C393.8,165.0 390.8,170.0 387.5,177.5C384.2,185.0 381.7,194.6 380.0,205.0C378.3,215.4 378.8,230.0 377.5,240.0C376.2,250.0 375.4,257.5 372.5,265.0C369.6,272.5 365.4,280.0 360.0,285.0C354.6,290.0 345.8,292.8 340.0,295.0C334.2,297.2 330.8,298.3 325.0,298.5C319.2,298.7 312.5,296.8 305.0,296.0C297.5,295.2 286.7,293.5 280.0,294.0C273.3,294.5 268.5,296.3 265.0,299.0C261.5,301.7 259.2,304.8 259.0,310.0C258.8,315.2 264.2,322.5 264.0,330.0C263.8,337.5 259.8,347.5 257.5,355.0C255.2,362.5 250.8,369.6 250.0,375.0C249.2,380.4 250.4,383.9 252.5,387.5C254.6,391.1 258.8,394.4 262.5,396.5C266.2,398.6 271.8,397.4 275.0,400.0C278.2,402.6 280.7,407.8 281.5,412.0C282.3,416.2 282.6,420.8 280.0,425.0C277.4,429.2 273.5,432.7 266.0,437.0C258.5,441.3 244.0,445.8 235.0,451.0C226.0,456.2 217.8,462.0 212.0,468.0C206.2,474.0 203.0,478.8 200.0,487.0C197.0,495.2 195.0,512.0 194.0,517.0" fill="none" stroke="#b84608" stroke-width="1"/>
<path d="M287.0,661.0C288.2,659.7 291.5,655.2 294.0,653.0C296.5,650.8 297.3,648.8 302.0,648.0C306.7,647.2 317.3,649.0 322.0,648.0C326.7,647.0 328.1,644.0 330.0,642.0C331.9,640.0 333.1,639.0 333.4,636.0C333.6,633.0 334.1,629.2 331.5,624.0C328.9,618.8 323.4,613.3 318.0,605.0C312.6,596.7 304.0,581.0 299.0,574.0C294.0,567.0 290.9,566.2 288.0,563.0C285.1,559.8 282.2,558.3 281.7,555.0C281.2,551.7 283.7,546.4 285.0,543.0C286.3,539.6 287.0,537.4 289.5,534.4C292.0,531.4 295.8,528.2 300.0,525.0C304.2,521.8 310.9,519.5 315.0,515.4C319.1,511.3 321.4,508.1 324.7,500.4C328.0,492.7 333.9,479.2 335.0,469.0C336.1,458.8 330.7,449.3 331.5,439.0C332.3,428.7 336.1,416.7 340.0,407.0C343.9,397.3 350.8,387.6 355.0,381.0C359.2,374.4 359.2,371.2 365.0,367.5C370.8,363.8 380.0,361.0 390.0,358.5C400.0,356.0 417.5,356.4 425.0,352.5C432.5,348.6 432.9,342.1 435.0,335.0C437.1,327.9 436.2,319.2 437.5,310.0C438.8,300.8 439.6,287.5 442.5,280.0C445.4,272.5 451.2,270.0 455.0,265.0C458.8,260.0 462.5,252.8 465.0,250.0C467.5,247.2 468.0,246.7 470.0,248.0C472.0,249.3 474.5,252.7 477.0,258.0C479.5,263.3 481.2,273.0 485.0,280.0C488.8,287.0 494.2,295.7 500.0,300.0C505.8,304.3 514.2,306.0 520.0,306.0C525.8,306.0 529.2,304.0 535.0,300.0C540.8,296.0 545.8,287.5 555.0,282.0C564.2,276.5 580.0,271.2 590.0,267.0C600.0,262.8 605.8,261.0 615.0,257.0C624.2,253.0 636.7,243.0 645.0,243.0C653.3,243.0 662.2,250.0 665.0,257.0C667.8,264.0 663.7,277.0 662.0,285.0C660.3,293.0 660.3,300.0 655.0,305.0C649.7,310.0 637.5,312.5 630.0,315.0C622.5,317.5 617.5,317.2 610.0,320.0C602.5,322.8 592.5,327.8 585.0,332.0C577.5,336.2 569.5,338.7 565.0,345.0C560.5,351.3 559.5,360.8 558.0,370.0C556.5,379.2 555.7,390.0 556.0,400.0C556.3,410.0 558.5,420.8 560.0,430.0C561.5,439.2 560.0,446.0 565.0,455.0C570.0,464.0 581.7,473.3 590.0,484.0C598.3,494.7 607.5,508.2 615.0,519.0C622.5,529.8 629.6,539.8 635.0,549.0C640.4,558.2 645.8,564.0 647.5,574.0C649.2,584.0 647.1,597.3 645.0,609.0C642.9,620.7 638.3,635.3 635.0,644.0C631.7,652.7 626.7,658.2 625.0,661.0" fill="none" stroke="#b84608" stroke-width="1"/>
<path d="M1189.0,112.0C1187.9,116.7 1184.8,129.1 1182.5,140.0C1180.2,150.9 1177.9,169.8 1175.0,177.5C1172.1,185.2 1170.0,184.6 1165.0,186.0C1160.0,187.4 1150.8,188.0 1145.0,186.0C1139.2,184.0 1136.2,177.7 1130.0,174.0C1123.8,170.3 1115.8,164.7 1107.5,164.0C1099.2,163.3 1087.1,164.8 1080.0,170.0C1072.9,175.2 1069.8,187.1 1065.0,195.0C1060.2,202.9 1053.3,210.8 1051.0,217.5C1048.7,224.2 1049.8,227.1 1051.0,235.0C1052.2,242.9 1056.8,252.5 1058.5,265.0C1060.2,277.5 1060.8,296.7 1061.0,310.0C1061.2,323.3 1061.4,331.7 1060.0,345.0C1058.6,358.3 1054.6,378.5 1052.5,390.0C1050.4,401.5 1050.4,404.8 1047.5,414.0C1044.6,423.2 1042.1,434.8 1035.0,445.0C1027.9,455.2 1014.2,466.4 1005.0,475.0C995.8,483.6 989.2,489.2 980.0,496.5C970.8,503.8 964.2,513.2 950.0,519.0C935.8,524.8 910.0,526.9 895.0,531.5C880.0,536.1 870.0,538.2 860.0,546.5C850.0,554.8 843.3,572.3 835.0,581.5C826.7,590.7 819.2,596.1 810.0,601.5C800.8,606.9 789.6,611.1 780.0,614.0C770.4,616.9 759.2,620.7 752.5,619.0C745.8,617.3 742.1,609.8 740.0,604.0C737.9,598.2 741.2,590.2 740.0,584.0C738.8,577.8 737.5,572.3 732.5,566.5C727.5,560.7 715.8,556.9 710.0,549.0C704.2,541.1 699.0,529.8 697.5,519.0C696.0,508.2 701.4,495.7 701.0,484.0C700.6,472.3 698.2,460.0 695.0,449.0C691.8,438.0 687.4,427.0 682.0,418.0C676.6,409.0 666.2,401.8 662.5,395.0C658.8,388.2 658.8,381.7 660.0,377.5C661.2,373.3 665.0,370.4 670.0,370.0C675.0,369.6 681.7,371.7 690.0,375.0C698.3,378.3 710.0,387.7 720.0,390.0C730.0,392.3 740.0,388.5 750.0,389.0C760.0,389.5 771.2,393.3 780.0,393.0C788.8,392.7 795.8,392.5 802.5,387.0C809.2,381.5 814.6,372.8 820.0,360.0C825.4,347.2 831.2,326.7 835.0,310.0C838.8,293.3 842.5,272.5 842.5,260.0C842.5,247.5 835.8,245.0 835.0,235.0C834.2,225.0 838.3,209.2 837.5,200.0C836.7,190.8 835.4,186.7 830.0,180.0C824.6,173.3 815.0,165.8 805.0,160.0C795.0,154.2 779.2,150.8 770.0,145.0C760.8,139.2 754.7,130.5 750.0,125.0C745.3,119.5 743.3,114.2 742.0,112.0" fill="none" stroke="#b84608" stroke-width="1"/>
<path d="M510.0,112.0C510.5,115.8 512.0,128.7 513.0,135.0C514.0,141.3 514.4,145.0 516.0,150.0C517.6,155.0 521.3,159.2 522.5,165.0C523.7,170.8 522.4,178.7 523.0,185.0C523.6,191.3 524.0,198.8 526.0,203.0C528.0,207.2 531.4,210.1 535.0,210.0C538.6,209.9 544.2,205.8 547.5,202.5C550.8,199.2 552.5,194.6 555.0,190.0C557.5,185.4 560.0,179.2 562.5,175.0C565.0,170.8 567.1,167.9 570.0,165.0C572.9,162.1 574.2,160.7 580.0,157.5C585.8,154.3 596.7,147.9 605.0,146.0C613.3,144.1 621.7,147.4 630.0,146.0C638.3,144.6 648.3,141.0 655.0,137.5C661.7,134.0 665.3,129.2 670.0,125.0C674.7,120.8 680.8,114.2 683.0,112.0" fill="none" stroke="#b84608" stroke-width="1"/>
<path d="M899.0,112.0C899.2,115.8 898.2,127.8 900.0,135.0C901.8,142.2 907.5,146.7 910.0,155.0C912.5,163.3 913.5,175.0 915.0,185.0C916.5,195.0 916.9,206.8 919.0,215.0C921.1,223.2 924.0,230.2 927.5,234.0C931.0,237.8 935.6,238.2 940.0,237.5C944.4,236.8 950.2,235.4 954.0,230.0C957.8,224.6 960.2,214.2 962.5,205.0C964.8,195.8 966.7,183.3 967.5,175.0C968.3,166.7 966.8,162.5 967.5,155.0C968.2,147.5 970.4,137.2 971.5,130.0C972.6,122.8 973.6,115.0 974.0,112.0" fill="none" stroke="#b84608" stroke-width="1"/>
<path d="M1342.0,319.0C1338.8,319.6 1328.5,322.5 1322.5,322.5C1316.5,322.5 1309.9,323.6 1306.0,319.0C1302.1,314.4 1303.3,304.0 1299.0,295.0C1294.7,286.0 1285.0,272.8 1280.0,265.0C1275.0,257.2 1273.3,249.8 1269.0,248.5C1264.7,247.2 1258.0,252.2 1254.0,257.5C1250.0,262.8 1249.0,270.8 1245.0,280.0C1241.0,289.2 1232.9,304.6 1230.0,312.5C1227.1,320.4 1230.0,323.3 1227.5,327.5C1225.0,331.7 1221.2,333.8 1215.0,337.5C1208.8,341.2 1196.7,345.4 1190.0,350.0C1183.3,354.6 1180.0,358.3 1175.0,365.0C1170.0,371.7 1163.6,382.5 1160.0,390.0C1156.4,397.5 1154.3,401.7 1153.5,410.0C1152.7,418.3 1154.3,430.0 1155.0,440.0C1155.7,450.0 1156.8,461.7 1157.5,470.0C1158.2,478.3 1159.8,483.5 1159.0,490.0C1158.2,496.5 1156.5,500.0 1152.5,509.0C1148.5,518.0 1142.1,533.2 1135.0,544.0C1127.9,554.8 1116.2,564.8 1110.0,574.0C1103.8,583.2 1102.5,589.8 1097.5,599.0C1092.5,608.2 1086.2,621.5 1080.0,629.0C1073.8,636.5 1068.3,639.8 1060.0,644.0C1051.7,648.2 1039.5,651.2 1030.0,654.0C1020.5,656.8 1007.5,659.8 1003.0,661.0" fill="none" stroke="#b84608" stroke-width="1"/>
<path d="M1342.0,419.0C1340.4,418.0 1336.2,418.7 1332.5,413.0C1328.8,407.3 1323.9,391.3 1320.0,385.0C1316.1,378.7 1313.6,375.0 1309.0,375.0C1304.4,375.0 1297.8,378.3 1292.5,385.0C1287.2,391.7 1281.9,402.5 1277.5,415.0C1273.1,427.5 1270.6,443.5 1266.0,460.0C1261.4,476.5 1256.0,498.3 1250.0,514.0C1244.0,529.7 1240.0,541.5 1230.0,554.0C1220.0,566.5 1203.3,577.3 1190.0,589.0C1176.7,600.7 1161.0,612.0 1150.0,624.0C1139.0,636.0 1128.3,654.8 1124.0,661.0" fill="none" stroke="#b84608" stroke-width="1"/>
<path d="M1342.0,566.5C1337.5,567.8 1324.1,571.1 1315.0,574.0C1305.9,576.9 1296.7,577.3 1287.5,584.0C1278.3,590.7 1269.6,603.2 1260.0,614.0C1250.4,624.8 1237.3,641.2 1230.0,649.0C1222.7,656.8 1218.3,659.0 1216.0,661.0" fill="none" stroke="#b84608" stroke-width="1"/>
<path d="M433.0,661.0C433.8,654.0 435.5,630.2 437.5,619.0C439.5,607.8 440.4,602.3 445.0,594.0C449.6,585.7 455.8,572.3 465.0,569.0C474.2,565.7 489.6,571.5 500.0,574.0C510.4,576.5 521.7,579.0 527.5,584.0C533.3,589.0 533.3,596.5 535.0,604.0C536.7,611.5 539.2,619.5 537.5,629.0C535.8,638.5 527.1,655.7 525.0,661.0" fill="none" stroke="#b84608" stroke-width="1"/>
<path d="M194.0,643.0C197.1,643.3 207.8,643.5 212.5,645.0C217.2,646.5 219.4,649.3 222.0,652.0C224.6,654.7 227.0,659.5 228.0,661.0" fill="none" stroke="#b84608" stroke-width="1"/>
<path d="M915,377.5L940,377.5" stroke="#000" stroke-width="1"/>
<path d="M927.5,375L927.5,377.5" stroke="#000" stroke-width="1"/>
<text x="914.5" y="376.5" transform="rotate(-90 914.5 376.5)" font-family="Liberation Serif" font-size="12.500" text-anchor="middle" fill="#000">10</text>
<path d="M1095,380.5L1120,380.5" stroke="#000" stroke-width="1"/>
<path d="M1107.5,380.5L1107.5,383" stroke="#000" stroke-width="1"/>
<text x="1123.5" y="380.5" transform="rotate(90 1123.5 380.5)" font-family="Liberation Serif" font-size="12.500" text-anchor="middle" fill="#000">12</text>
<path d="M1195,490L1209,472.5" stroke="#000" stroke-width="1"/>
<path d="M1202,481L1204.5,483.5" stroke="#000" stroke-width="1"/>
<text x="1212" y="470" transform="rotate(30 1212 470)" font-family="Liberation Serif" font-size="12.500" text-anchor="middle" fill="#000">14</text>
<path d="M1027.5,554L1032.5,531.5" stroke="#000" stroke-width="1"/>
<path d="M1030,542.5L1033,543" stroke="#000" stroke-width="1"/>
<text x="1036" y="529.5" transform="rotate(12 1036 529.5)" font-family="Liberation Serif" font-size="12.500" text-anchor="middle" fill="#000">15</text>
<path d="M931,605.5L947.5,589" stroke="#000" stroke-width="1"/>
<path d="M939,597L941.5,599.5" stroke="#000" stroke-width="1"/>
<text x="952" y="591" transform="rotate(32 952 591)" font-family="Liberation Serif" font-size="12.500" text-anchor="middle" fill="#000">13</text>
</svg>
<div class="t" style="left:281px;top:54.6px;letter-spacing:0.59px;font-family:'Liberation Serif',serif;font-size:13px;">D3f</div>
<div class="t" style="left:452px;top:222.6px;letter-spacing:-0.21px;font-family:'Liberation Serif',serif;font-size:13px;">D3fm</div>
<div class="t" style="left:923px;top:355.6px;letter-spacing:0.23px;font-family:'Liberation Serif',serif;font-size:13px;">C1t</div>
</div>

<!-- MAP SCROLLBARS + BOTTOM BAR -->
<div class="a" style="left:1341px;top:114px;width:17px;height:546px;background:repeating-conic-gradient(#fff 0 25%,#f0f0f0 0 50%) 0 0/2px 2px"></div>
<div class="a" style="left:1358px;top:114px;width:2px;height:564px;background:#f6f6f6"></div>
<div class="rbtn" style="left:1341px;top:114px;width:17px;height:17px;background:#f0f0f0"></div>
<svg style="left:1345px;top:120px" width="8" height="5" viewBox="0 0 8 5"><path d="M0,4.500l4,-4l4,4z" fill="#000"/></svg>
<div class="rbtn" style="left:1341px;top:643px;width:17px;height:17px;background:#f0f0f0"></div>
<svg style="left:1345px;top:649px" width="8" height="5" viewBox="0 0 8 5"><path d="M0,.5l4,4l4,-4z" fill="#000"/></svg>
<div class="rbtn" style="left:1341px;top:392px;width:17px;height:33px;background:#f0f0f0"></div>
<div class="a" style="left:195px;top:660px;width:1163px;height:17px;background:repeating-conic-gradient(#fff 0 25%,#f0f0f0 0 50%) 0 0/2px 2px"></div>
<div class="a" style="left:195px;top:677px;width:1165px;height:1px;background:#e8e8e8"></div>
<div class="a" style="left:1341px;top:660px;width:17px;height:17px;background:#f0f0f0"></div>
<svg style="left:199px;top:663px" width="10" height="10" viewBox="0 0 10 10"><circle cx="5" cy="5" r="4.500" fill="#1838c8" stroke="#000" stroke-width=".6"/><path d="M2,3c1.500,-1.500 4,-1.500 5,0c-1,2 -3,1 -3.500,3c-1,-.5 -1.500,-1.500 -1.500,-3z" fill="#30c040"/></svg>
<svg style="left:216px;top:664px" width="9" height="9" viewBox="0 0 9 9"><path d="M1.500,.5h4l2,2v6h-6z" fill="#fff" stroke="#000" stroke-width="1"/><path d="M5.500,.5v2h2" fill="none" stroke="#000" stroke-width=".8"/></svg>
<div class="sep" style="left:232px;top:662px;height:13px"></div>
<svg style="left:240px;top:663px" width="9" height="9" viewBox="0 0 9 9"><path d="M1.500,4a3,3 0 0 1 5.500,-1M7.500,5a3,3 0 0 1 -5.500,1" fill="none" stroke="#000" stroke-width="1"/><path d="M7.500,.5v3h-3zM1.500,8.500v-3h3z" fill="#000"/></svg>
<div class="a" style="left:260px;top:664px;width:2px;height:7px;background:#000"></div>
<div class="a" style="left:264px;top:664px;width:2px;height:7px;background:#000"></div>
<div class="rbtn" style="left:271px;top:660px;width:17px;height:17px;background:#f0f0f0"></div>
<svg style="left:276px;top:664px" width="5" height="9" viewBox="0 0 5 9"><path d="M4.500,0l-4.500,4.500l4.500,4.500z" fill="#000"/></svg>
<div class="rbtn" style="left:1325px;top:660px;width:16px;height:17px;background:#f0f0f0"></div>
<svg style="left:1331px;top:664px" width="5" height="9" viewBox="0 0 5 9"><path d="M.5,0l4.500,4.500l-4.500,4.500z" fill="#000"/></svg>
<div class="rbtn" style="left:1034px;top:660px;width:153px;height:17px;background:#f0f0f0"></div>

<!-- DRAW TOOLBAR -->
<div class="a" style="left:0;top:678px;width:1360px;height:1px;background:#fff"></div>
<div class="grip" style="left:1px;top:681px;height:22px"></div>
<div class="t" style="left:12px;top:686.0px;letter-spacing:-0.15px;"><u>D</u>rawing</div>
<div class="dd" style="left:60px;top:690px"></div>
<svg style="left:78px;top:683px" width="12" height="17" viewBox="0 0 12 17"><path d="M1,0v14l3.500,-3.500l2.500,6l2.200,-1l-2.500,-5.500h5z" fill="#000"/></svg>
<svg style="left:98px;top:683px" width="16" height="16" viewBox="0 0 16 16"><path d="M13.500,11A6.500,6.500 0 1 1 14.500,8" fill="none" stroke="#b0b0b0" stroke-width="1.200"/><path d="M12.500,9l2,3.500l1.500,-3.500z" fill="#b0b0b0"/><circle cx="8" cy="8" r="1.500" fill="none" stroke="#b0b0b0"/></svg>
<svg style="left:122px;top:682px" width="17" height="17" viewBox="0 0 17 17"><rect x="5.500" y="1.500" width="9" height="8" fill="#f4f4f4" stroke="#a8a8a8" stroke-dasharray="1.500,1"/><circle cx="6" cy="10" r="3.500" fill="#e0e0e0" stroke="#a8a8a8" stroke-width="1.200"/><path d="M8.500,12.500l3,3" stroke="#a8a8a8" stroke-width="1.800"/></svg>
<div class="sep" style="left:145px;top:681px;height:22px"></div>
<svg style="left:154px;top:685px" width="13" height="13" viewBox="0 0 13 13"><rect x="1" y="1" width="11" height="11" fill="#fff" stroke="#000" stroke-width="1.300"/></svg>
<div class="dd" style="left:175px;top:688px"></div>
<div class="t" style="left:197.5px;top:684.3px;letter-spacing:0.22px;font-family:'Liberation Serif',serif;font-weight:bold;font-size:17px;">A</div>
<div class="dd" style="left:219px;top:688px"></div>
<svg style="left:236px;top:683px" width="18" height="16" viewBox="0 0 18 16"><path d="M2,13l2,-9l10,-2l-4,6l5,5z" fill="none" stroke="#a8a8a8" stroke-width="1.200"/><g fill="#a8a8a8"><rect x="1" y="11.500" width="3" height="3"/><rect x="2.500" y="2.500" width="3" height="3"/><rect x="12.500" y=".5" width="3" height="3"/><rect x="8.500" y="6.500" width="3" height="3"/><rect x="13.500" y="11.500" width="3" height="3"/></g></svg>
<div class="sep" style="left:260px;top:681px;height:22px"></div>
<div class="combo" style="left:265px;top:681px;width:169px;height:20px"></div>
<div class="cbtn" style="left:417px;top:683px;width:15px;height:16px"></div>
<svg style="left:269px;top:684px" width="12" height="15" viewBox="0 0 12 15"><rect x=".5" y=".5" width="11" height="14" fill="#dfe8f8" stroke="#7088c0"/><text x="1.500" y="12" font-family="Liberation Serif" font-style="italic" font-weight="bold" font-size="13" fill="#207020">O</text></svg>
<div class="t" style="left:286px;top:685.5px;letter-spacing:-1.00px;">Arial</div>
<div class="combo" style="left:441px;top:681px;width:44px;height:20px"></div>
<div class="cbtn" style="left:468px;top:683px;width:15px;height:16px"></div>
<div class="t" style="left:444.5px;top:685.5px;letter-spacing:-1.43px;">10</div>
<div class="t" style="left:500px;top:685.3px;letter-spacing:0.16px;font-family:'Liberation Serif',serif;font-weight:bold;font-size:14px;">B</div>
<div class="t" style="left:523px;top:685.3px;letter-spacing:2.05px;font-family:'Liberation Serif',serif;font-style:italic;font-weight:bold;font-size:14px;">I</div>
<div class="t" style="left:546px;top:684.9px;letter-spacing:0.25px;font-family:'Liberation Serif',serif;text-decoration:underline;font-size:13.500px;font-weight:bold;">U</div>
<div class="sep" style="left:566px;top:681px;height:22px"></div>
<div class="t" style="left:574.5px;top:682.3px;letter-spacing:1.44px;font-family:'Liberation Serif',serif;font-weight:bold;font-size:16px;">A</div>
<div class="a" style="left:573px;top:696px;width:17px;height:3px;background:#000"></div>
<div class="dd" style="left:596px;top:688px"></div>
<svg style="left:618px;top:682px" width="16" height="12" viewBox="0 0 16 12"><path d="M3,6l5,-4l5,5l-5,4.500z" fill="#fff" stroke="#000" stroke-width="1"/><path d="M8,2c-2,-2 -4,0 -2,2" fill="none" stroke="#000"/><path d="M13,7c1.500,1 2,3 1,4.500c-1.500,-1 -1.500,-3 -1,-4.500z" fill="#2040c0"/><path d="M3,6l5,-1l5,2" fill="none" stroke="#1030a0" stroke-width="1"/></svg>
<div class="a" style="left:619px;top:696px;width:16px;height:3px;background:#ffffc0"></div>
<div class="dd" style="left:640px;top:688px"></div>
<svg style="left:661px;top:682px" width="16" height="12" viewBox="0 0 16 12"><path d="M5,9l7,-8l2.500,2l-7,8l-3.500,1z" fill="#2040c0" stroke="#001060" stroke-width=".8"/><path d="M1,8c1,-1.500 2,-1.500 3,0" fill="none" stroke="#000" stroke-width=".8"/></svg>
<div class="a" style="left:660px;top:696px;width:17px;height:3px;background:#000"></div>
<div class="dd" style="left:682px;top:688px"></div>
<div class="a" style="left:709px;top:686px;width:5px;height:5px;border-radius:50%;background:#1020a0"></div>
<div class="a" style="left:703px;top:696px;width:17px;height:3px;background:#60f020"></div>
<div class="dd" style="left:726px;top:688px"></div>
<div class="sep" style="left:745px;top:679px;height:27px"></div>
<div class="hline" style="top:707px"></div>
<!-- STATUS -->
<div class="a" style="left:1030px;top:711px;width:21px;height:16px;border:1px solid;border-color:#a0a0a0 #fff #fff #a0a0a0"></div>
<div class="a" style="left:1054px;top:711px;width:306px;height:16px;border:1px solid;border-color:#a0a0a0 #fff #fff #a0a0a0"></div>
<div class="t" style="left:1056px;top:713.3px;letter-spacing:-0.51px;white-space:pre;">332027,724  5382673,997 Meters</div>

<!-- TASKBAR -->
<div id="taskbar" class="a" style="left:0;top:728px;width:1360px;height:40px;overflow:hidden;background:linear-gradient(90deg,#2d6849 0,#397656 90px,#3f7d5b 200px,#45845f 330px,#3d7b58 430px,#468862 560px,#3f7c58 640px,#4a8e66 700px,#437f5c 760px,#4d9469 840px,#529c70 900px,#57a475 1000px,#4d9569 1070px,#428560 1110px,#3f815d 1200px,#3d7d5a 1360px)">
 <svg style="left:0;top:0" width="1360" height="40"><g style="filter:blur(2.500px)" fill="none" stroke="#2f6445" stroke-opacity=".55" stroke-width="5"><path d="M640,46L760,20L880,-2"/><path d="M690,-4L730,24L760,46"/><path d="M930,-4L900,20L850,46"/><path d="M1000,46L1060,16L1110,-4"/></g>
 <g style="filter:blur(4px)" fill="#6cc08c" fill-opacity=".35"><ellipse cx="790" cy="6" rx="40" ry="10"/><ellipse cx="980" cy="22" rx="55" ry="14"/><ellipse cx="700" cy="34" rx="30" ry="8"/></g></svg>
 <div class="a" style="left:0;top:0;width:1360px;height:40px;background:linear-gradient(180deg,rgba(255,255,255,.16),rgba(255,255,255,.04) 45%,rgba(0,0,0,.06) 55%,rgba(0,0,0,.10))"></div>
 <div class="a" style="left:0;top:0;width:1360px;height:1px;background:#1f4030"></div>
 <div class="a" style="left:0;top:1px;width:1360px;height:1px;background:rgba(200,255,220,.45)"></div>
</div>
<style>.tbtn{position:absolute;top:729px;height:39px;width:58px;border:1px solid rgba(20,60,40,.75);border-radius:3px;box-shadow:inset 0 0 0 1px rgba(255,255,255,.45);background:linear-gradient(180deg,rgba(255,255,255,.30),rgba(255,255,255,.14) 50%,rgba(255,255,255,.04) 51%,rgba(255,255,255,.12))}
.tbtn.act{background:linear-gradient(180deg,rgba(255,255,255,.55),rgba(255,255,255,.35) 50%,rgba(255,255,255,.22) 51%,rgba(255,255,255,.32))}
.dot2{background:#1c4630 !important;box-shadow:none !important}
.dot{position:absolute;width:2px;height:2px;background:#0c2218;box-shadow:-1px -1px 0 rgba(255,255,255,.18)}</style>
<div class="tbtn" style="left:138px"></div>
<div class="tbtn" style="left:200px"></div>
<div class="tbtn" style="left:448px"></div>
<div class="tbtn act" style="left:510px"></div>
<div class="tbtn" style="left:572px"></div>
<svg style="left:8px;top:730px" width="38" height="38" viewBox="0 0 38 38"><defs><radialGradient id="og" cx=".5" cy=".35" r=".7"><stop offset="0" stop-color="#9fd6ff"/><stop offset=".45" stop-color="#3a86d8"/><stop offset="1" stop-color="#0b2f78"/></radialGradient></defs>
<circle cx="19" cy="19" r="18" fill="url(#og)" stroke="#123a6a" stroke-width="1.200"/><ellipse cx="19" cy="10" rx="14" ry="8" fill="#fff" fill-opacity=".25"/>
<path d="M9,12c3,-1.500 6,-1.500 8.500,.3l-1.600,6.500c-2.700,-1.700 -5.700,-1.600 -8.600,-.2z" fill="#f25a22"/>
<path d="M19.500,12.800c2.700,1.600 5.700,1.600 8.700,.2l-1.700,6.600c-3,1.400 -6,1.400 -8.700,-.3z" fill="#80c828"/>
<path d="M6.800,20.500c2.900,-1.400 5.900,-1.500 8.600,.2l-1.600,6.400c-2.700,-1.700 -5.700,-1.600 -8.600,-.2z" fill="#3aa0e8"/>
<path d="M17.300,21.200c2.700,1.700 5.700,1.700 8.700,.3l-1.700,6.500c-3,1.400 -6,1.400 -8.600,-.3z" fill="#fbc11a"/></svg>
<svg style="left:92px;top:732px" width="26" height="30" viewBox="0 0 26 30"><rect x="2" y="3" width="22" height="25" fill="#fff" stroke="#8aa0c8" stroke-width="1"/><rect x="2" y="1" width="22" height="4" fill="#7898d0"/><text x="4" y="18" font-family="Liberation Serif" font-weight="bold" font-size="15" fill="#f07820">A</text><path d="M15,10h7M15,13h7M15,16h7M5,21h17M5,24h17" stroke="#6888c8" stroke-width="1.200"/></svg>
<svg style="left:152px;top:734px" width="31" height="28" viewBox="0 0 31 28"><path d="M1,6h10l2,3h17v18h-29z" fill="#f0d878" stroke="#b89830" stroke-width="1"/><path d="M3,3h9l2,3h14v4h-25z" fill="#f8e8a0" stroke="#b89830" stroke-width=".8"/><rect x="4" y="1" width="4" height="2.500" fill="#20a830"/><rect x="12" y="3" width="4" height="2.500" fill="#d03020"/><rect x="20" y="5" width="4" height="2.500" fill="#2080d0"/><path d="M1,12h29v15h-29z" fill="#f4e090" stroke="#b89830" stroke-width=".8"/><path d="M5,27v-6c0,-3 3,-4 5,-4h11c2,0 5,1 5,4v6h-5v-5h-11v5z" fill="#78c0f0" stroke="#3080c0" stroke-width=".8"/></svg>
<svg style="left:215px;top:734px" width="28" height="28" viewBox="0 0 28 28"><circle cx="14" cy="14" r="13.500" fill="#fff"/><path d="M14,.5a13.500,13.500 0 0 1 11.700,6.750h-11.700a6.750,6.750 0 0 0 -6.300,4.300l-4.600,-6.300a13.500,13.500 0 0 1 10.900,-4.750z" fill="#e03a2a"/><path d="M25.700,7.250a13.500,13.500 0 0 1 -11.000,20.250l5.800,-10.100a6.750,6.750 0 0 0 -.4,-7.600z" fill="#f8c81c" transform="rotate(3 14 14)"/><path d="M14.700,27.500a13.500,13.500 0 0 1 -11.600,-22.250l5,9.500a6.750,6.750 0 0 0 11.300,4.200z" fill="#3aa848"/><circle cx="14" cy="14" r="6" fill="#fff"/><circle cx="14" cy="14" r="4.800" fill="#3a78e0"/></svg>
<svg style="left:277px;top:734px" width="24" height="27" viewBox="0 0 24 27"><rect x="9" y="2" width="14" height="22" fill="#a8d0f0" stroke="#6898d0" stroke-width=".8"/><rect x="6" y="3" width="14" height="22" fill="#90c0ec" stroke="#6898d0" stroke-width=".8"/><circle cx="11" cy="14" r="10" fill="#f07818" stroke="#fff" stroke-width="1.500"/><path d="M8,8.500v11l9,-5.500z" fill="#fff"/></svg>
<svg style="left:339px;top:734px" width="28" height="26" viewBox="0 0 28 26"><defs><linearGradient id="psg" x1="0" y1="0" x2="0" y2="1"><stop offset="0" stop-color="#0c78c8"/><stop offset="1" stop-color="#0a3c80"/></linearGradient></defs><rect x="0" y="0" width="28" height="26" fill="url(#psg)"/><rect x="0" y="0" width="28" height="1.500" fill="#30a0e8"/><text x="5" y="19" font-family="Liberation Sans" font-weight="bold" font-size="15" fill="#a8d8ff">Ps</text></svg>
<svg style="left:400px;top:732px" width="31" height="31" viewBox="0 0 31 31"><circle cx="15.500" cy="15.500" r="15" fill="#f4f4f4" stroke="#d0d0d0" stroke-width=".6"/><path d="M4,6.500l2.800,-3l8.700,9l8.700,-9l2.800,3l-9,10v13.500h-5v-13.500z" fill="#e81820"/></svg>
<svg style="left:463px;top:734px" width="28" height="28" viewBox="0 0 28 28"><rect x="1" y="1" width="26" height="26" fill="#e6eefc" stroke="#2850a8" stroke-width="1.800"/><rect x="4" y="4" width="20" height="20" fill="#c8d8f4" stroke="#7898d8" stroke-width=".8"/><text x="3.500" y="22" font-family="Liberation Sans" font-weight="bold" font-style="italic" font-size="22" fill="#2c56b4" stroke="#1c3c88" stroke-width=".5">W</text></svg>
<svg style="left:524px;top:733px" width="32" height="32" viewBox="0 0 32 32"><circle cx="15" cy="15" r="14" fill="#1430d8" stroke="#0a1470" stroke-width="1"/><path d="M5,7c4,-4 10,-5 15,-3c2,3 0,6 -3,7c-3,1 -4,5 -7,5.500c-3,0 -6,-4 -5,-9.500z" fill="#28b838"/><path d="M12,22c2,-2 6,-2 8,0c0,4 -4,6 -7,6z" fill="#28b838"/><path d="M22,10c3,1 5,4 4,8c-2,0 -4,-3 -4,-8z" fill="#28b838"/><circle cx="15" cy="13" r="7" fill="#20f0f0" fill-opacity=".9" stroke="#102060" stroke-width="1.800"/><ellipse cx="16" cy="14" rx="3.500" ry="3" fill="#30e858"/><path d="M20,18.500l10,11" stroke="#1030c0" stroke-width="4"/><path d="M20.500,19l9,10" stroke="#40c0ff" stroke-width="1.500"/></svg>
<svg style="left:584px;top:736px" width="33" height="26" viewBox="0 0 33 26"><g stroke="#303030" stroke-width=".7"><path d="M1,6l6,-4h20l5,3v5l-5,2h-21z" fill="#a040a0"/><path d="M1,6l5,3h21l5,-4" fill="none"/><path d="M1,13l5,2h21l5,-3v5l-5,3h-21l-5,-2z" fill="#2850d0"/><path d="M1,19l5,2h21l5,-3v4l-5,3h-21l-5,-2z" fill="#28a038"/><path d="M1,6v18M6,9v16M27,9v16M32,5v17" fill="none"/></g><path d="M1,12l5,2.500h21l5,-3M1,18.500l5,2.500h21l5,-3" stroke="#f0f0f0" stroke-width="1.800" fill="none"/><rect x="17" y="3" width="4" height="21" fill="#c89038" stroke="#604010" stroke-width=".6"/><rect x="16.500" y="12" width="5" height="4" fill="#e8e0c0" stroke="#404040" stroke-width=".6"/></svg>
<svg style="left:1153px;top:746px" width="9" height="6" viewBox="0 0 9 6"><path d="M0,5l4.500,-4.500l4.500,4.500z" fill="#fff"/></svg>
<svg style="left:1174px;top:741px" width="16" height="16" viewBox="0 0 16 16"><path d="M1,1h14v14h-14z" fill="#f4f4f4"/><path d="M1,1h6l-3,6l4,-6h7l-8,8l-6,6z" fill="#e81828"/><path d="M1,8l5,-3l-5,10z" fill="#e81828"/><path d="M7,9l8,-6v5l-4,3z" fill="#f8f8f8"/><rect x="10" y="11" width="5" height="4" fill="#202020"/><path d="M7,10l3,1v4h-6z" fill="#e81828"/></svg>
<svg style="left:1196px;top:742px" width="17" height="15" viewBox="0 0 17 15"><path d="M1,5h3l4.500,-4.500v14l-4.500,-4.500h-3z" fill="#f4f4f4" stroke="#333" stroke-width=".7"/><path d="M10.500,5c1.200,1.200 1.200,3.800 0,5M12.500,3c2.300,2.300 2.300,6.700 0,9M14.300,1.200c3,3.300 3,9.300 0,12.600" fill="none" stroke="#f4f4f4" stroke-width="1.200"/></svg>
<svg style="left:1222px;top:740px" width="17" height="17" viewBox="0 0 17 17"><rect x="5" y="3" width="11" height="9" fill="#2a5a40" stroke="#f4f4f4" stroke-width="1.500"/><path d="M7,15.500h8M11,12v3" stroke="#f4f4f4" stroke-width="1.500"/><path d="M1.500,1v3M4.500,1v3" stroke="#f4f4f4" stroke-width="1.200"/><rect x=".5" y="4" width="5" height="4" fill="#f4f4f4" stroke="#333" stroke-width=".5"/><path d="M3,8v5h3" fill="none" stroke="#f4f4f4" stroke-width="1.300"/></svg>
<svg style="left:1246px;top:741px" width="15" height="17" viewBox="0 0 15 17"><path d="M2,1v15" stroke="#f4f4f4" stroke-width="1.800"/><path d="M2,1v15" stroke="#333" stroke-width=".4" transform="translate(1.200,0)"/><path d="M3.500,2c3,-1.200 5,1.800 10,0c-1,2 -1,4 0,6c-5,1.800 -7,-1.200 -10,0z" fill="#f4f4f4" stroke="#444" stroke-width=".5"/></svg>
<div class="t" style="left:1293.5px;top:733.8px;letter-spacing:-0.53px;color:#fff;">15:11</div>
<div class="t" style="left:1280px;top:751.3px;letter-spacing:-0.71px;color:#fff;">04.06.2014</div>
<div class="a" style="left:1347px;top:729px;width:13px;height:39px;border:1px solid rgba(20,60,40,.6);box-shadow:inset 0 0 0 1px rgba(255,255,255,.28);background:linear-gradient(180deg,rgba(255,255,255,.16),rgba(255,255,255,.05))"></div>
<div class="dot" style="left:58px;top:733px"></div>
<div class="dot" style="left:61px;top:733px"></div>
<div class="dot" style="left:64px;top:733px"></div>
<div class="dot" style="left:58px;top:737px"></div>
<div class="dot" style="left:61px;top:737px"></div>
<div class="dot" style="left:64px;top:737px"></div>
<div class="dot" style="left:58px;top:741px"></div>
<div class="dot" style="left:61px;top:741px"></div>
<div class="dot" style="left:64px;top:741px"></div>
<div class="dot" style="left:58px;top:745px"></div>
<div class="dot" style="left:61px;top:745px"></div>
<div class="dot" style="left:64px;top:745px"></div>
<div class="dot" style="left:58px;top:749px"></div>
<div class="dot" style="left:61px;top:749px"></div>
<div class="dot" style="left:64px;top:749px"></div>
<div class="dot" style="left:58px;top:753px"></div>
<div class="dot" style="left:61px;top:753px"></div>
<div class="dot" style="left:64px;top:753px"></div>
<div class="dot" style="left:58px;top:757px"></div>
<div class="dot" style="left:61px;top:757px"></div>
<div class="dot" style="left:64px;top:757px"></div>
<div class="dot" style="left:58px;top:761px"></div>
<div class="dot" style="left:61px;top:761px"></div>
<div class="dot" style="left:64px;top:761px"></div>
<div class="dot dot2" style="left:1105px;top:733px"></div>
<div class="dot dot2" style="left:1108px;top:733px"></div>
<div class="dot dot2" style="left:1111px;top:733px"></div>
<div class="dot dot2" style="left:1105px;top:737px"></div>
<div class="dot dot2" style="left:1108px;top:737px"></div>
<div class="dot dot2" style="left:1111px;top:737px"></div>
<div class="dot dot2" style="left:1105px;top:741px"></div>
<div class="dot dot2" style="left:1108px;top:741px"></div>
<div class="dot dot2" style="left:1111px;top:741px"></div>
<div class="dot dot2" style="left:1105px;top:745px"></div>
<div class="dot dot2" style="left:1108px;top:745px"></div>
<div class="dot dot2" style="left:1111px;top:745px"></div>
<div class="dot dot2" style="left:1105px;top:749px"></div>
<div class="dot dot2" style="left:1108px;top:749px"></div>
<div class="dot dot2" style="left:1111px;top:749px"></div>
<div class="dot dot2" style="left:1105px;top:753px"></div>
<div class="dot dot2" style="left:1108px;top:753px"></div>
<div class="dot dot2" style="left:1111px;top:753px"></div>
<div class="dot dot2" style="left:1105px;top:757px"></div>
<div class="dot dot2" style="left:1108px;top:757px"></div>
<div class="dot dot2" style="left:1111px;top:757px"></div>
<div class="dot dot2" style="left:1105px;top:761px"></div>
<div class="dot dot2" style="left:1108px;top:761px"></div>
<div class="dot dot2" style="left:1111px;top:761px"></div>

</body></html>
